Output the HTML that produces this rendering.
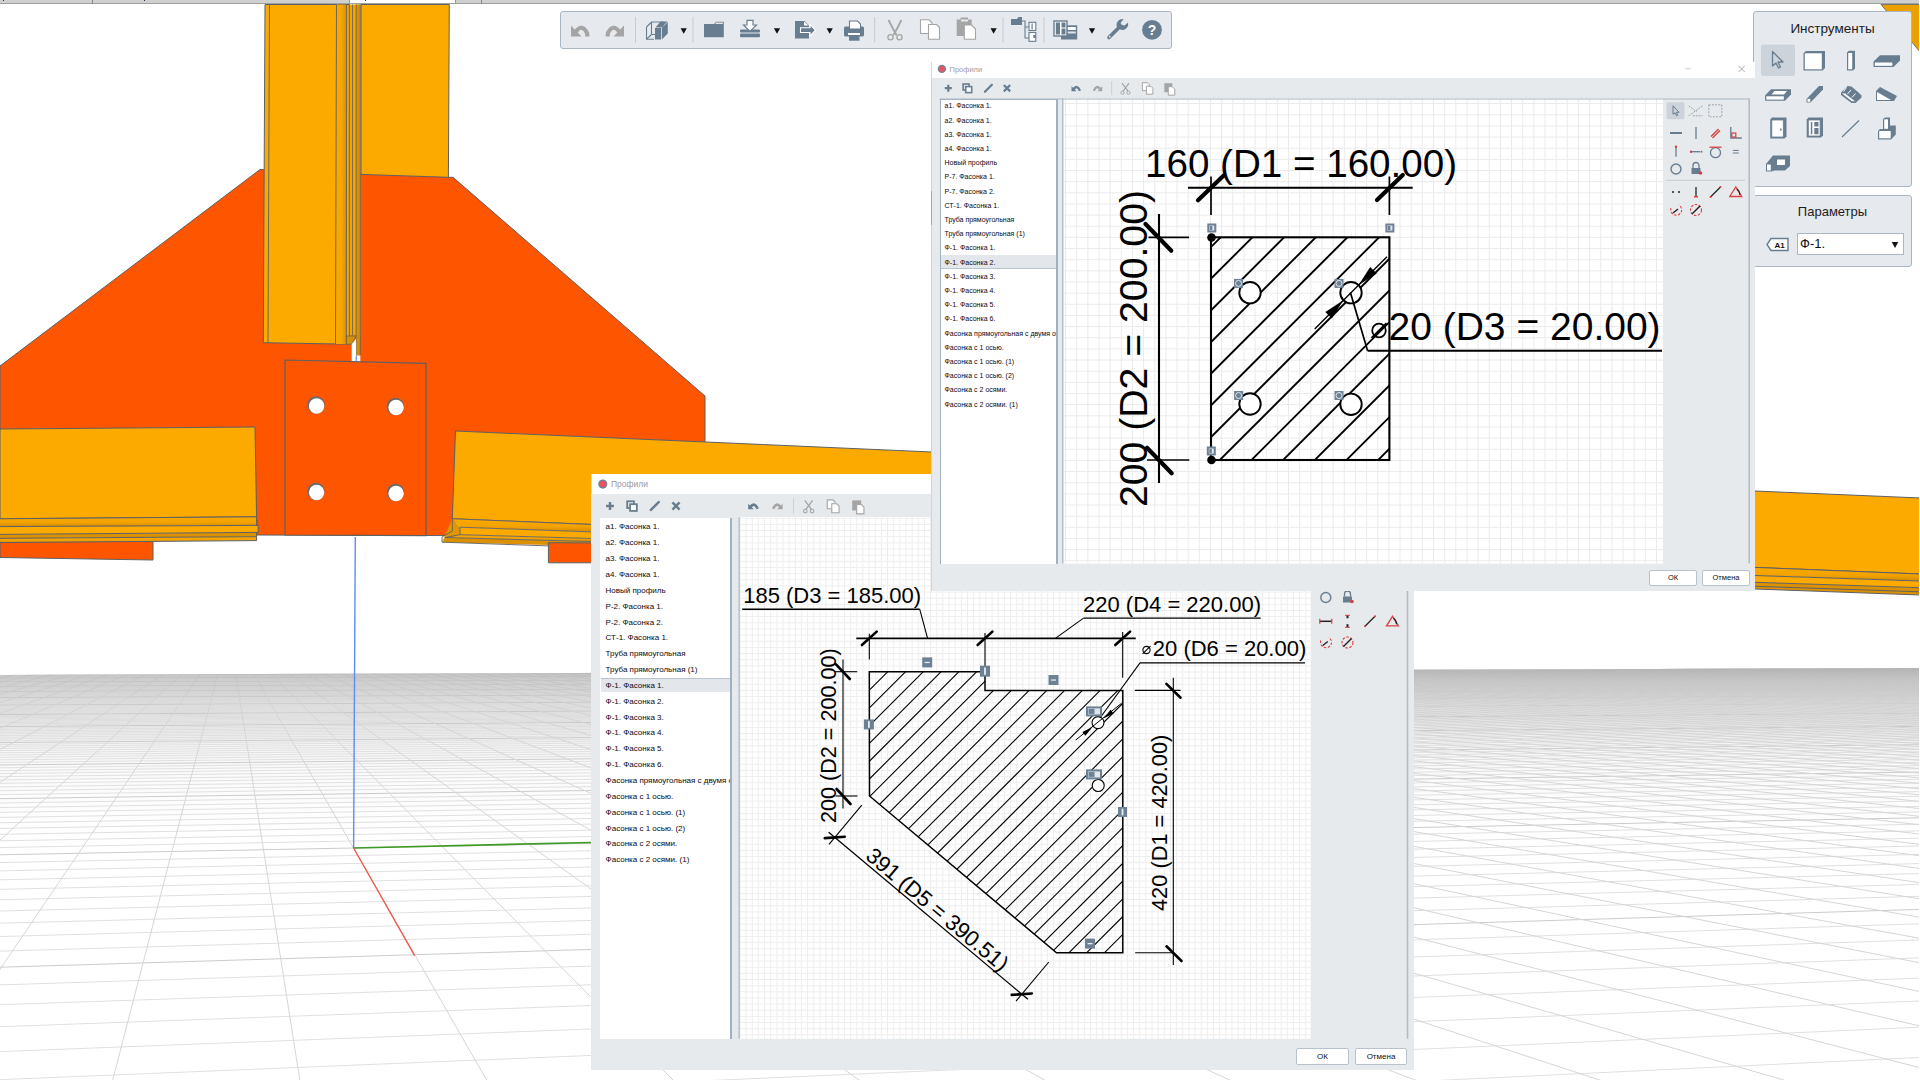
<!DOCTYPE html><html><head><meta charset="utf-8"><style>
*{box-sizing:border-box}
html,body{margin:0;padding:0;width:1920px;height:1080px;overflow:hidden;background:#fff;font-family:"Liberation Sans", sans-serif}
.abs{position:absolute}
.panel{position:absolute;background:#e6eaee;border:1px solid #aab6c2;border-radius:3px}
.dlg{position:absolute;background:#e7eaed}
.lst{position:absolute;background:#fff;border-left:1px solid #9fb0c0;border-right:2px solid #9fb0c0;border-top:1px solid #9fb0c0}
.lst div{position:absolute;left:5px;white-space:nowrap;color:#2a2030;font-size:8px;line-height:10px}
.btn{position:absolute;background:#fff;border:1px solid #b8c2cc;border-radius:2px;font-size:8px;text-align:center;color:#111}
</style></head><body>

<svg class="abs" style="left:0;top:0" width="1920" height="1080" viewBox="0 0 1920 1080">
<defs>
<clipPath id="floorclip"><polygon points="0,675 1920,668 1920,1080 0,1080"/></clipPath>
<linearGradient id="fgrad" x1="0" y1="0" x2="0" y2="1">
<stop offset="0" stop-color="#cbcbcb"/><stop offset="0.03" stop-color="#dadada"/><stop offset="0.1" stop-color="#ececec"/><stop offset="0.25" stop-color="#fafafa"/><stop offset="0.4" stop-color="#fff"/></linearGradient>
<linearGradient id="fshade" x1="0" y1="0" x2="0" y2="1"><stop offset="0" stop-color="#000" stop-opacity="0.16"/><stop offset="0.15" stop-color="#000" stop-opacity="0.08"/><stop offset="0.45" stop-color="#000" stop-opacity="0.02"/><stop offset="1" stop-color="#000" stop-opacity="0"/></linearGradient>
</defs>
<g clip-path="url(#floorclip)">
<rect x="0" y="668" width="1920" height="412" fill="url(#fgrad)"/>
<line x1="-8939.0" y1="683.0" x2="1980.5" y2="667.1" stroke="#cbcbcb" stroke-width="1"/>
<line x1="-9042.9" y1="683.6" x2="1989.1" y2="667.3" stroke="#e0e0e0" stroke-width="1"/>
<line x1="-9149.2" y1="684.2" x2="1997.8" y2="667.5" stroke="#e0e0e0" stroke-width="1"/>
<line x1="-9258.0" y1="684.8" x2="2006.5" y2="667.7" stroke="#e0e0e0" stroke-width="1"/>
<line x1="-9369.3" y1="685.4" x2="2015.3" y2="667.9" stroke="#e0e0e0" stroke-width="1"/>
<line x1="-9483.2" y1="686.1" x2="2024.2" y2="668.0" stroke="#e0e0e0" stroke-width="1"/>
<line x1="-9599.9" y1="686.7" x2="2033.2" y2="668.2" stroke="#e0e0e0" stroke-width="1"/>
<line x1="-9719.4" y1="687.4" x2="2042.3" y2="668.4" stroke="#e0e0e0" stroke-width="1"/>
<line x1="-9841.9" y1="688.1" x2="2051.5" y2="668.6" stroke="#e0e0e0" stroke-width="1"/>
<line x1="-9967.4" y1="688.8" x2="2060.8" y2="668.8" stroke="#e0e0e0" stroke-width="1"/>
<line x1="-10096.1" y1="689.5" x2="2070.1" y2="669.0" stroke="#cbcbcb" stroke-width="1"/>
<line x1="-10228.1" y1="690.3" x2="2079.6" y2="669.2" stroke="#e0e0e0" stroke-width="1"/>
<line x1="-10363.5" y1="691.0" x2="2089.2" y2="669.4" stroke="#e0e0e0" stroke-width="1"/>
<line x1="-10502.4" y1="691.8" x2="2098.8" y2="669.6" stroke="#e0e0e0" stroke-width="1"/>
<line x1="-10645.1" y1="692.6" x2="2108.6" y2="669.8" stroke="#e0e0e0" stroke-width="1"/>
<line x1="-10791.6" y1="693.5" x2="2118.5" y2="670.0" stroke="#e0e0e0" stroke-width="1"/>
<line x1="-10942.1" y1="694.3" x2="2128.4" y2="670.2" stroke="#e0e0e0" stroke-width="1"/>
<line x1="-11096.7" y1="695.2" x2="2138.5" y2="670.4" stroke="#e0e0e0" stroke-width="1"/>
<line x1="-11255.7" y1="696.1" x2="2148.7" y2="670.6" stroke="#e0e0e0" stroke-width="1"/>
<line x1="-11419.2" y1="697.0" x2="2159.0" y2="670.8" stroke="#e0e0e0" stroke-width="1"/>
<line x1="-11587.5" y1="698.0" x2="2169.4" y2="671.0" stroke="#cbcbcb" stroke-width="1"/>
<line x1="-11760.7" y1="699.0" x2="2179.9" y2="671.3" stroke="#e0e0e0" stroke-width="1"/>
<line x1="-11939.0" y1="700.0" x2="2190.5" y2="671.5" stroke="#e0e0e0" stroke-width="1"/>
<line x1="-12122.7" y1="701.0" x2="2201.3" y2="671.7" stroke="#e0e0e0" stroke-width="1"/>
<line x1="-12312.1" y1="702.1" x2="2212.2" y2="671.9" stroke="#e0e0e0" stroke-width="1"/>
<line x1="-12507.3" y1="703.2" x2="2223.2" y2="672.2" stroke="#e0e0e0" stroke-width="1"/>
<line x1="-12708.7" y1="704.3" x2="2234.3" y2="672.4" stroke="#e0e0e0" stroke-width="1"/>
<line x1="-12916.6" y1="705.5" x2="2245.5" y2="672.6" stroke="#e0e0e0" stroke-width="1"/>
<line x1="-13131.3" y1="706.7" x2="2256.9" y2="672.8" stroke="#e0e0e0" stroke-width="1"/>
<line x1="-13353.1" y1="708.0" x2="2268.3" y2="673.1" stroke="#e0e0e0" stroke-width="1"/>
<line x1="-13582.4" y1="709.3" x2="2280.0" y2="673.3" stroke="#cbcbcb" stroke-width="1"/>
<line x1="-13819.6" y1="710.6" x2="2291.7" y2="673.6" stroke="#e0e0e0" stroke-width="1"/>
<line x1="-14065.1" y1="712.0" x2="2303.6" y2="673.8" stroke="#e0e0e0" stroke-width="1"/>
<line x1="-14319.3" y1="713.5" x2="2315.6" y2="674.1" stroke="#e0e0e0" stroke-width="1"/>
<line x1="-14582.7" y1="715.0" x2="2327.8" y2="674.3" stroke="#e0e0e0" stroke-width="1"/>
<line x1="-14855.8" y1="716.5" x2="2340.1" y2="674.6" stroke="#e0e0e0" stroke-width="1"/>
<line x1="-15139.2" y1="718.1" x2="2352.6" y2="674.8" stroke="#e0e0e0" stroke-width="1"/>
<line x1="-15433.4" y1="719.8" x2="2365.2" y2="675.1" stroke="#e0e0e0" stroke-width="1"/>
<line x1="-15739.1" y1="721.5" x2="2377.9" y2="675.3" stroke="#e0e0e0" stroke-width="1"/>
<line x1="-16057.0" y1="723.3" x2="2390.8" y2="675.6" stroke="#e0e0e0" stroke-width="1"/>
<line x1="-16387.8" y1="725.2" x2="2403.9" y2="675.9" stroke="#cbcbcb" stroke-width="1"/>
<line x1="-16732.3" y1="727.1" x2="2417.1" y2="676.2" stroke="#e0e0e0" stroke-width="1"/>
<line x1="-17091.4" y1="729.2" x2="2430.5" y2="676.4" stroke="#e0e0e0" stroke-width="1"/>
<line x1="-17466.0" y1="731.3" x2="2444.1" y2="676.7" stroke="#e0e0e0" stroke-width="1"/>
<line x1="-17857.2" y1="733.5" x2="2457.8" y2="677.0" stroke="#e0e0e0" stroke-width="1"/>
<line x1="-18266.1" y1="735.8" x2="2471.7" y2="677.3" stroke="#e0e0e0" stroke-width="1"/>
<line x1="-18693.9" y1="738.3" x2="2485.7" y2="677.6" stroke="#e0e0e0" stroke-width="1"/>
<line x1="-19142.0" y1="740.8" x2="2500.0" y2="677.9" stroke="#e0e0e0" stroke-width="1"/>
<line x1="-19611.8" y1="743.5" x2="2514.4" y2="678.2" stroke="#e0e0e0" stroke-width="1"/>
<line x1="-20105.0" y1="746.3" x2="2529.0" y2="678.5" stroke="#e0e0e0" stroke-width="1"/>
<line x1="-20623.3" y1="749.2" x2="2543.8" y2="678.8" stroke="#cbcbcb" stroke-width="1"/>
<line x1="-21168.7" y1="752.3" x2="2558.8" y2="679.1" stroke="#e0e0e0" stroke-width="1"/>
<line x1="-21743.4" y1="755.5" x2="2573.9" y2="679.4" stroke="#e0e0e0" stroke-width="1"/>
<line x1="-22349.8" y1="759.0" x2="2589.3" y2="679.7" stroke="#e0e0e0" stroke-width="1"/>
<line x1="-22990.6" y1="762.6" x2="2604.9" y2="680.0" stroke="#e0e0e0" stroke-width="1"/>
<line x1="-23668.9" y1="766.5" x2="2620.7" y2="680.4" stroke="#e0e0e0" stroke-width="1"/>
<line x1="-24388.1" y1="770.5" x2="2636.7" y2="680.7" stroke="#e0e0e0" stroke-width="1"/>
<line x1="-25151.8" y1="774.9" x2="2652.9" y2="681.0" stroke="#e0e0e0" stroke-width="1"/>
<line x1="-25964.4" y1="779.5" x2="2669.3" y2="681.4" stroke="#e0e0e0" stroke-width="1"/>
<line x1="-26830.8" y1="784.4" x2="2686.0" y2="681.7" stroke="#e0e0e0" stroke-width="1"/>
<line x1="-27756.5" y1="789.6" x2="2702.9" y2="682.1" stroke="#cbcbcb" stroke-width="1"/>
<line x1="-28747.8" y1="795.2" x2="2720.0" y2="682.4" stroke="#e0e0e0" stroke-width="1"/>
<line x1="-29811.8" y1="801.3" x2="2737.4" y2="682.8" stroke="#e0e0e0" stroke-width="1"/>
<line x1="-30957.0" y1="807.8" x2="2755.0" y2="683.1" stroke="#e0e0e0" stroke-width="1"/>
<line x1="-32193.0" y1="814.8" x2="2772.8" y2="683.5" stroke="#e0e0e0" stroke-width="1"/>
<line x1="-33530.9" y1="822.4" x2="2790.9" y2="683.9" stroke="#e0e0e0" stroke-width="1"/>
<line x1="-34984.1" y1="830.6" x2="2809.3" y2="684.2" stroke="#e0e0e0" stroke-width="1"/>
<line x1="-36567.9" y1="839.6" x2="2827.9" y2="684.6" stroke="#e0e0e0" stroke-width="1"/>
<line x1="-38301.0" y1="849.4" x2="2846.8" y2="685.0" stroke="#e0e0e0" stroke-width="1"/>
<line x1="-40205.3" y1="860.2" x2="2866.0" y2="685.4" stroke="#e0e0e0" stroke-width="1"/>
<line x1="-42307.8" y1="872.1" x2="2885.5" y2="685.8" stroke="#cbcbcb" stroke-width="1"/>
<line x1="-44640.8" y1="885.3" x2="2905.2" y2="686.2" stroke="#e0e0e0" stroke-width="1"/>
<line x1="-47244.6" y1="900.1" x2="2925.3" y2="686.6" stroke="#e0e0e0" stroke-width="1"/>
<line x1="-50169.2" y1="916.7" x2="2945.6" y2="687.1" stroke="#e0e0e0" stroke-width="1"/>
<line x1="-53477.8" y1="935.4" x2="2966.3" y2="687.5" stroke="#e0e0e0" stroke-width="1"/>
<line x1="-57251.4" y1="956.8" x2="2987.3" y2="687.9" stroke="#e0e0e0" stroke-width="1"/>
<line x1="-61595.3" y1="981.4" x2="3008.6" y2="688.4" stroke="#e0e0e0" stroke-width="1"/>
<line x1="-66649.4" y1="1010.1" x2="3030.2" y2="688.8" stroke="#e0e0e0" stroke-width="1"/>
<line x1="-72603.5" y1="1043.8" x2="3052.2" y2="689.3" stroke="#e0e0e0" stroke-width="1"/>
<line x1="-79721.3" y1="1084.2" x2="3074.5" y2="689.7" stroke="#e0e0e0" stroke-width="1"/>
<line x1="-88381.1" y1="1133.3" x2="3097.2" y2="690.2" stroke="#cbcbcb" stroke-width="1"/>
<line x1="-99144.7" y1="1194.3" x2="3120.2" y2="690.7" stroke="#e0e0e0" stroke-width="1"/>
<line x1="-112884.7" y1="1272.2" x2="3143.6" y2="691.1" stroke="#e0e0e0" stroke-width="1"/>
<line x1="-131034.0" y1="1375.0" x2="3167.4" y2="691.6" stroke="#e0e0e0" stroke-width="1"/>
<line x1="-156120.6" y1="1517.2" x2="3191.6" y2="692.1" stroke="#e0e0e0" stroke-width="1"/>
<line x1="-193061.7" y1="1726.6" x2="3216.2" y2="692.6" stroke="#e0e0e0" stroke-width="1"/>
<line x1="-252859.5" y1="2065.6" x2="3241.2" y2="693.2" stroke="#e0e0e0" stroke-width="1"/>
<line x1="-366229.9" y1="2708.2" x2="3266.6" y2="693.7" stroke="#e0e0e0" stroke-width="1"/>
<line x1="-663583.1" y1="4393.7" x2="3292.5" y2="694.2" stroke="#e0e0e0" stroke-width="1"/>
<line x1="-891026.9" y1="5743.6" x2="3318.8" y2="694.8" stroke="#e0e0e0" stroke-width="1"/>
<line x1="-879894.1" y1="5769.9" x2="3345.5" y2="695.3" stroke="#cbcbcb" stroke-width="1"/>
<line x1="-868761.3" y1="5796.3" x2="3372.8" y2="695.9" stroke="#e0e0e0" stroke-width="1"/>
<line x1="-857628.6" y1="5822.7" x2="3400.5" y2="696.4" stroke="#e0e0e0" stroke-width="1"/>
<line x1="-846495.8" y1="5849.0" x2="3428.7" y2="697.0" stroke="#e0e0e0" stroke-width="1"/>
<line x1="-835363.0" y1="5875.4" x2="3457.4" y2="697.6" stroke="#e0e0e0" stroke-width="1"/>
<line x1="-824230.2" y1="5901.8" x2="3486.6" y2="698.2" stroke="#e0e0e0" stroke-width="1"/>
<line x1="-813097.4" y1="5928.1" x2="3516.3" y2="698.8" stroke="#e0e0e0" stroke-width="1"/>
<line x1="-801964.6" y1="5954.5" x2="3546.6" y2="699.5" stroke="#e0e0e0" stroke-width="1"/>
<line x1="-790831.8" y1="5980.9" x2="3577.5" y2="700.1" stroke="#e0e0e0" stroke-width="1"/>
<line x1="-779699.0" y1="6007.2" x2="3608.9" y2="700.7" stroke="#e0e0e0" stroke-width="1"/>
<line x1="-768566.2" y1="6033.6" x2="3641.0" y2="701.4" stroke="#cbcbcb" stroke-width="1"/>
<line x1="-757433.5" y1="6060.0" x2="3673.6" y2="702.1" stroke="#e0e0e0" stroke-width="1"/>
<line x1="-746300.7" y1="6086.3" x2="3706.9" y2="702.8" stroke="#e0e0e0" stroke-width="1"/>
<line x1="-735167.9" y1="6112.7" x2="3740.9" y2="703.5" stroke="#e0e0e0" stroke-width="1"/>
<line x1="-724035.1" y1="6139.1" x2="3775.5" y2="704.2" stroke="#e0e0e0" stroke-width="1"/>
<line x1="-712902.3" y1="6165.5" x2="3810.8" y2="704.9" stroke="#e0e0e0" stroke-width="1"/>
<line x1="-701769.5" y1="6191.8" x2="3846.8" y2="705.7" stroke="#e0e0e0" stroke-width="1"/>
<line x1="-690636.7" y1="6218.2" x2="3883.5" y2="706.4" stroke="#e0e0e0" stroke-width="1"/>
<line x1="-679503.9" y1="6244.6" x2="3921.0" y2="707.2" stroke="#e0e0e0" stroke-width="1"/>
<line x1="-668371.1" y1="6270.9" x2="3959.2" y2="708.0" stroke="#e0e0e0" stroke-width="1"/>
<line x1="-657238.3" y1="6297.3" x2="3998.3" y2="708.8" stroke="#cbcbcb" stroke-width="1"/>
<line x1="-646105.6" y1="6323.7" x2="4038.2" y2="709.6" stroke="#e0e0e0" stroke-width="1"/>
<line x1="-634972.8" y1="6350.0" x2="4078.9" y2="710.4" stroke="#e0e0e0" stroke-width="1"/>
<line x1="-623840.0" y1="6376.4" x2="4120.6" y2="711.3" stroke="#e0e0e0" stroke-width="1"/>
<line x1="-612707.2" y1="6402.8" x2="4163.1" y2="712.2" stroke="#e0e0e0" stroke-width="1"/>
<line x1="-601574.4" y1="6429.1" x2="4206.6" y2="713.1" stroke="#e0e0e0" stroke-width="1"/>
<line x1="-590441.6" y1="6455.5" x2="4251.0" y2="714.0" stroke="#e0e0e0" stroke-width="1"/>
<line x1="-579308.8" y1="6481.9" x2="4296.5" y2="714.9" stroke="#e0e0e0" stroke-width="1"/>
<line x1="-568176.0" y1="6508.2" x2="4343.0" y2="715.9" stroke="#e0e0e0" stroke-width="1"/>
<line x1="-557043.2" y1="6534.6" x2="4390.5" y2="716.9" stroke="#e0e0e0" stroke-width="1"/>
<line x1="-545910.5" y1="6561.0" x2="4439.2" y2="717.9" stroke="#cbcbcb" stroke-width="1"/>
<line x1="-534777.7" y1="6587.3" x2="4489.1" y2="718.9" stroke="#e0e0e0" stroke-width="1"/>
<line x1="-523644.9" y1="6613.7" x2="4540.1" y2="720.0" stroke="#e0e0e0" stroke-width="1"/>
<line x1="-512512.1" y1="6640.1" x2="4592.4" y2="721.0" stroke="#e0e0e0" stroke-width="1"/>
<line x1="-501379.3" y1="6666.4" x2="4645.9" y2="722.1" stroke="#e0e0e0" stroke-width="1"/>
<line x1="-490246.5" y1="6692.8" x2="4700.8" y2="723.3" stroke="#e0e0e0" stroke-width="1"/>
<line x1="-479113.7" y1="6719.2" x2="4757.0" y2="724.4" stroke="#e0e0e0" stroke-width="1"/>
<line x1="-467980.9" y1="6745.5" x2="4814.7" y2="725.6" stroke="#e0e0e0" stroke-width="1"/>
<line x1="-456848.1" y1="6771.9" x2="4873.9" y2="726.9" stroke="#e0e0e0" stroke-width="1"/>
<line x1="-445715.3" y1="6798.3" x2="4934.6" y2="728.1" stroke="#e0e0e0" stroke-width="1"/>
<line x1="-434582.6" y1="6824.7" x2="4997.0" y2="729.4" stroke="#cbcbcb" stroke-width="1"/>
<line x1="-423449.8" y1="6851.0" x2="5061.0" y2="730.7" stroke="#e0e0e0" stroke-width="1"/>
<line x1="-412317.0" y1="6877.4" x2="5126.7" y2="732.1" stroke="#e0e0e0" stroke-width="1"/>
<line x1="-401184.2" y1="6903.8" x2="5194.3" y2="733.5" stroke="#e0e0e0" stroke-width="1"/>
<line x1="-390051.4" y1="6930.1" x2="5263.8" y2="734.9" stroke="#e0e0e0" stroke-width="1"/>
<line x1="-378918.6" y1="6956.5" x2="5335.2" y2="736.4" stroke="#e0e0e0" stroke-width="1"/>
<line x1="-367785.8" y1="6982.9" x2="5408.7" y2="737.9" stroke="#e0e0e0" stroke-width="1"/>
<line x1="-356653.0" y1="7009.2" x2="5484.3" y2="739.4" stroke="#e0e0e0" stroke-width="1"/>
<line x1="-345520.2" y1="7035.6" x2="5562.2" y2="741.1" stroke="#e0e0e0" stroke-width="1"/>
<line x1="-334387.5" y1="7062.0" x2="5642.4" y2="742.7" stroke="#e0e0e0" stroke-width="1"/>
<line x1="-323254.7" y1="7088.3" x2="5725.1" y2="744.4" stroke="#cbcbcb" stroke-width="1"/>
<line x1="-312121.9" y1="7114.7" x2="5810.3" y2="746.2" stroke="#e0e0e0" stroke-width="1"/>
<line x1="-300989.1" y1="7141.1" x2="5898.2" y2="748.0" stroke="#e0e0e0" stroke-width="1"/>
<line x1="-289856.3" y1="7167.4" x2="5988.9" y2="749.9" stroke="#e0e0e0" stroke-width="1"/>
<line x1="-278723.5" y1="7193.8" x2="6082.6" y2="751.8" stroke="#e0e0e0" stroke-width="1"/>
<line x1="-267590.7" y1="7220.2" x2="6179.4" y2="753.8" stroke="#e0e0e0" stroke-width="1"/>
<line x1="-256457.9" y1="7246.5" x2="6279.4" y2="755.9" stroke="#e0e0e0" stroke-width="1"/>
<line x1="-245325.1" y1="7272.9" x2="6382.9" y2="758.0" stroke="#e0e0e0" stroke-width="1"/>
<line x1="-234192.4" y1="7299.3" x2="6489.9" y2="760.2" stroke="#e0e0e0" stroke-width="1"/>
<line x1="-223059.6" y1="7325.6" x2="6600.8" y2="762.5" stroke="#e0e0e0" stroke-width="1"/>
<line x1="-211926.8" y1="7352.0" x2="6715.6" y2="764.9" stroke="#cbcbcb" stroke-width="1"/>
<line x1="-200794.0" y1="7378.4" x2="6834.6" y2="767.3" stroke="#e0e0e0" stroke-width="1"/>
<line x1="-189661.2" y1="7404.7" x2="6958.1" y2="769.9" stroke="#e0e0e0" stroke-width="1"/>
<line x1="-178528.4" y1="7431.1" x2="7086.3" y2="772.5" stroke="#e0e0e0" stroke-width="1"/>
<line x1="-167395.6" y1="7457.5" x2="7219.5" y2="775.3" stroke="#e0e0e0" stroke-width="1"/>
<line x1="-156262.8" y1="7483.9" x2="7358.0" y2="778.1" stroke="#e0e0e0" stroke-width="1"/>
<line x1="-145130.0" y1="7510.2" x2="7502.1" y2="781.1" stroke="#e0e0e0" stroke-width="1"/>
<line x1="-133997.2" y1="7536.6" x2="7652.1" y2="784.2" stroke="#e0e0e0" stroke-width="1"/>
<line x1="-122864.5" y1="7563.0" x2="7808.4" y2="787.4" stroke="#e0e0e0" stroke-width="1"/>
<line x1="-111731.7" y1="7589.3" x2="7971.4" y2="790.8" stroke="#e0e0e0" stroke-width="1"/>
<line x1="-8939.0" y1="683.0" x2="-898572.6" y2="5725.7" stroke="#d6d6d6" stroke-width="1"/>
<line x1="-8880.7" y1="682.9" x2="-895562.8" y2="5732.8" stroke="#d6d6d6" stroke-width="1"/>
<line x1="-8822.8" y1="682.8" x2="-892553.0" y2="5740.0" stroke="#d6d6d6" stroke-width="1"/>
<line x1="-8765.2" y1="682.7" x2="-889543.1" y2="5747.1" stroke="#d6d6d6" stroke-width="1"/>
<line x1="-8707.9" y1="682.6" x2="-886533.3" y2="5754.2" stroke="#d6d6d6" stroke-width="1"/>
<line x1="-8651.0" y1="682.5" x2="-883523.4" y2="5761.3" stroke="#d6d6d6" stroke-width="1"/>
<line x1="-8594.4" y1="682.5" x2="-880513.6" y2="5768.5" stroke="#d6d6d6" stroke-width="1"/>
<line x1="-8538.2" y1="682.4" x2="-877503.8" y2="5775.6" stroke="#d6d6d6" stroke-width="1"/>
<line x1="-8482.3" y1="682.3" x2="-874493.9" y2="5782.7" stroke="#d6d6d6" stroke-width="1"/>
<line x1="-8426.7" y1="682.2" x2="-871484.1" y2="5789.9" stroke="#d6d6d6" stroke-width="1"/>
<line x1="-8371.4" y1="682.1" x2="-868474.2" y2="5797.0" stroke="#d6d6d6" stroke-width="1"/>
<line x1="-8316.5" y1="682.1" x2="-865464.4" y2="5804.1" stroke="#d6d6d6" stroke-width="1"/>
<line x1="-8261.9" y1="682.0" x2="-862454.6" y2="5811.2" stroke="#d6d6d6" stroke-width="1"/>
<line x1="-8207.6" y1="681.9" x2="-859444.7" y2="5818.4" stroke="#d6d6d6" stroke-width="1"/>
<line x1="-8153.6" y1="681.8" x2="-856434.9" y2="5825.5" stroke="#d6d6d6" stroke-width="1"/>
<line x1="-8100.0" y1="681.8" x2="-853425.0" y2="5832.6" stroke="#d6d6d6" stroke-width="1"/>
<line x1="-8046.6" y1="681.7" x2="-850415.2" y2="5839.8" stroke="#d6d6d6" stroke-width="1"/>
<line x1="-7993.6" y1="681.6" x2="-847405.4" y2="5846.9" stroke="#d6d6d6" stroke-width="1"/>
<line x1="-7940.8" y1="681.5" x2="-844395.5" y2="5854.0" stroke="#d6d6d6" stroke-width="1"/>
<line x1="-7888.4" y1="681.4" x2="-841385.7" y2="5861.1" stroke="#d6d6d6" stroke-width="1"/>
<line x1="-7836.3" y1="681.4" x2="-838375.9" y2="5868.3" stroke="#d6d6d6" stroke-width="1"/>
<line x1="-7784.4" y1="681.3" x2="-835366.0" y2="5875.4" stroke="#d6d6d6" stroke-width="1"/>
<line x1="-7732.9" y1="681.2" x2="-832356.2" y2="5882.5" stroke="#d6d6d6" stroke-width="1"/>
<line x1="-7681.6" y1="681.1" x2="-829346.3" y2="5889.7" stroke="#d6d6d6" stroke-width="1"/>
<line x1="-7630.7" y1="681.1" x2="-826336.5" y2="5896.8" stroke="#d6d6d6" stroke-width="1"/>
<line x1="-7580.0" y1="681.0" x2="-823326.7" y2="5903.9" stroke="#d6d6d6" stroke-width="1"/>
<line x1="-7529.6" y1="680.9" x2="-820316.8" y2="5911.0" stroke="#d6d6d6" stroke-width="1"/>
<line x1="-7479.5" y1="680.9" x2="-817307.0" y2="5918.2" stroke="#d6d6d6" stroke-width="1"/>
<line x1="-7429.7" y1="680.8" x2="-814297.1" y2="5925.3" stroke="#d6d6d6" stroke-width="1"/>
<line x1="-7380.1" y1="680.7" x2="-811287.3" y2="5932.4" stroke="#d6d6d6" stroke-width="1"/>
<line x1="-7330.8" y1="680.6" x2="-808277.5" y2="5939.6" stroke="#d6d6d6" stroke-width="1"/>
<line x1="-7281.8" y1="680.6" x2="-805267.6" y2="5946.7" stroke="#d6d6d6" stroke-width="1"/>
<line x1="-7233.1" y1="680.5" x2="-802257.8" y2="5953.8" stroke="#d6d6d6" stroke-width="1"/>
<line x1="-7184.6" y1="680.4" x2="-799248.0" y2="5960.9" stroke="#d6d6d6" stroke-width="1"/>
<line x1="-7136.4" y1="680.4" x2="-796238.1" y2="5968.1" stroke="#d6d6d6" stroke-width="1"/>
<line x1="-7088.5" y1="680.3" x2="-793228.3" y2="5975.2" stroke="#d6d6d6" stroke-width="1"/>
<line x1="-7040.8" y1="680.2" x2="-790218.4" y2="5982.3" stroke="#d6d6d6" stroke-width="1"/>
<line x1="-6993.4" y1="680.1" x2="-787208.6" y2="5989.5" stroke="#d6d6d6" stroke-width="1"/>
<line x1="-6946.3" y1="680.1" x2="-784198.8" y2="5996.6" stroke="#d6d6d6" stroke-width="1"/>
<line x1="-6899.4" y1="680.0" x2="-781188.9" y2="6003.7" stroke="#d6d6d6" stroke-width="1"/>
<line x1="-6852.7" y1="679.9" x2="-778179.1" y2="6010.8" stroke="#d6d6d6" stroke-width="1"/>
<line x1="-6806.3" y1="679.9" x2="-775169.2" y2="6018.0" stroke="#d6d6d6" stroke-width="1"/>
<line x1="-6760.2" y1="679.8" x2="-772159.4" y2="6025.1" stroke="#d6d6d6" stroke-width="1"/>
<line x1="-6714.3" y1="679.7" x2="-769149.6" y2="6032.2" stroke="#d6d6d6" stroke-width="1"/>
<line x1="-6668.6" y1="679.7" x2="-766139.7" y2="6039.4" stroke="#d6d6d6" stroke-width="1"/>
<line x1="-6623.2" y1="679.6" x2="-763129.9" y2="6046.5" stroke="#d6d6d6" stroke-width="1"/>
<line x1="-6578.1" y1="679.5" x2="-760120.0" y2="6053.6" stroke="#d6d6d6" stroke-width="1"/>
<line x1="-6533.1" y1="679.5" x2="-757110.2" y2="6060.7" stroke="#d6d6d6" stroke-width="1"/>
<line x1="-6488.4" y1="679.4" x2="-754100.4" y2="6067.9" stroke="#d6d6d6" stroke-width="1"/>
<line x1="-6444.0" y1="679.4" x2="-751090.5" y2="6075.0" stroke="#d6d6d6" stroke-width="1"/>
<line x1="-6399.8" y1="679.3" x2="-748080.7" y2="6082.1" stroke="#d6d6d6" stroke-width="1"/>
<line x1="-6355.8" y1="679.2" x2="-745070.9" y2="6089.3" stroke="#d6d6d6" stroke-width="1"/>
<line x1="-6312.0" y1="679.2" x2="-742061.0" y2="6096.4" stroke="#d6d6d6" stroke-width="1"/>
<line x1="-6268.5" y1="679.1" x2="-739051.2" y2="6103.5" stroke="#d6d6d6" stroke-width="1"/>
<line x1="-6225.2" y1="679.0" x2="-736041.3" y2="6110.6" stroke="#d6d6d6" stroke-width="1"/>
<line x1="-6182.1" y1="679.0" x2="-733031.5" y2="6117.8" stroke="#d6d6d6" stroke-width="1"/>
<line x1="-6139.3" y1="678.9" x2="-730021.7" y2="6124.9" stroke="#d6d6d6" stroke-width="1"/>
<line x1="-6096.6" y1="678.8" x2="-727011.8" y2="6132.0" stroke="#d6d6d6" stroke-width="1"/>
<line x1="-6054.2" y1="678.8" x2="-724002.0" y2="6139.2" stroke="#d6d6d6" stroke-width="1"/>
<line x1="-6012.0" y1="678.7" x2="-720992.1" y2="6146.3" stroke="#d6d6d6" stroke-width="1"/>
<line x1="-5970.0" y1="678.7" x2="-717982.3" y2="6153.4" stroke="#d6d6d6" stroke-width="1"/>
<line x1="-5928.3" y1="678.6" x2="-714972.5" y2="6160.6" stroke="#d6d6d6" stroke-width="1"/>
<line x1="-5886.7" y1="678.5" x2="-711962.6" y2="6167.7" stroke="#d6d6d6" stroke-width="1"/>
<line x1="-5845.4" y1="678.5" x2="-708952.8" y2="6174.8" stroke="#d6d6d6" stroke-width="1"/>
<line x1="-5804.2" y1="678.4" x2="-705942.9" y2="6181.9" stroke="#d6d6d6" stroke-width="1"/>
<line x1="-5763.3" y1="678.4" x2="-702933.1" y2="6189.1" stroke="#d6d6d6" stroke-width="1"/>
<line x1="-5722.6" y1="678.3" x2="-699923.3" y2="6196.2" stroke="#d6d6d6" stroke-width="1"/>
<line x1="-5682.1" y1="678.2" x2="-696913.4" y2="6203.3" stroke="#d6d6d6" stroke-width="1"/>
<line x1="-5641.8" y1="678.2" x2="-693903.6" y2="6210.5" stroke="#d6d6d6" stroke-width="1"/>
<line x1="-5601.7" y1="678.1" x2="-690893.8" y2="6217.6" stroke="#d6d6d6" stroke-width="1"/>
<line x1="-5561.8" y1="678.1" x2="-687883.9" y2="6224.7" stroke="#d6d6d6" stroke-width="1"/>
<line x1="-5522.1" y1="678.0" x2="-684874.1" y2="6231.8" stroke="#d6d6d6" stroke-width="1"/>
<line x1="-5482.6" y1="678.0" x2="-681864.2" y2="6239.0" stroke="#d6d6d6" stroke-width="1"/>
<line x1="-5443.3" y1="677.9" x2="-678854.4" y2="6246.1" stroke="#d6d6d6" stroke-width="1"/>
<line x1="-5404.1" y1="677.8" x2="-675844.6" y2="6253.2" stroke="#d6d6d6" stroke-width="1"/>
<line x1="-5365.2" y1="677.8" x2="-672834.7" y2="6260.4" stroke="#d6d6d6" stroke-width="1"/>
<line x1="-5326.5" y1="677.7" x2="-669824.9" y2="6267.5" stroke="#d6d6d6" stroke-width="1"/>
<line x1="-5287.9" y1="677.7" x2="-666815.0" y2="6274.6" stroke="#d6d6d6" stroke-width="1"/>
<line x1="-5249.6" y1="677.6" x2="-663805.2" y2="6281.7" stroke="#d6d6d6" stroke-width="1"/>
<line x1="-5211.4" y1="677.6" x2="-660795.4" y2="6288.9" stroke="#d6d6d6" stroke-width="1"/>
<line x1="-5173.4" y1="677.5" x2="-657785.5" y2="6296.0" stroke="#d6d6d6" stroke-width="1"/>
<line x1="-5135.7" y1="677.5" x2="-654775.7" y2="6303.1" stroke="#d6d6d6" stroke-width="1"/>
<line x1="-5098.0" y1="677.4" x2="-651765.9" y2="6310.3" stroke="#d6d6d6" stroke-width="1"/>
<line x1="-5060.6" y1="677.3" x2="-648756.0" y2="6317.4" stroke="#d6d6d6" stroke-width="1"/>
<line x1="-5023.4" y1="677.3" x2="-645746.2" y2="6324.5" stroke="#d6d6d6" stroke-width="1"/>
<line x1="-4986.3" y1="677.2" x2="-642736.3" y2="6331.6" stroke="#d6d6d6" stroke-width="1"/>
<line x1="-4949.4" y1="677.2" x2="-639726.5" y2="6338.8" stroke="#d6d6d6" stroke-width="1"/>
<line x1="-4912.7" y1="677.1" x2="-636716.7" y2="6345.9" stroke="#d6d6d6" stroke-width="1"/>
<line x1="-4876.2" y1="677.1" x2="-633706.8" y2="6353.0" stroke="#d6d6d6" stroke-width="1"/>
<line x1="-4839.8" y1="677.0" x2="-630697.0" y2="6360.2" stroke="#d6d6d6" stroke-width="1"/>
<line x1="-4803.6" y1="677.0" x2="-627687.1" y2="6367.3" stroke="#d6d6d6" stroke-width="1"/>
<line x1="-4767.6" y1="676.9" x2="-624677.3" y2="6374.4" stroke="#d6d6d6" stroke-width="1"/>
<line x1="-4731.7" y1="676.9" x2="-621667.5" y2="6381.5" stroke="#d6d6d6" stroke-width="1"/>
<line x1="-4696.1" y1="676.8" x2="-618657.6" y2="6388.7" stroke="#d6d6d6" stroke-width="1"/>
<line x1="-4660.5" y1="676.8" x2="-615647.8" y2="6395.8" stroke="#d6d6d6" stroke-width="1"/>
<line x1="-4625.2" y1="676.7" x2="-612637.9" y2="6402.9" stroke="#d6d6d6" stroke-width="1"/>
<line x1="-4590.0" y1="676.7" x2="-609628.1" y2="6410.1" stroke="#d6d6d6" stroke-width="1"/>
<line x1="-4555.0" y1="676.6" x2="-606618.3" y2="6417.2" stroke="#d6d6d6" stroke-width="1"/>
<line x1="-4520.2" y1="676.6" x2="-603608.4" y2="6424.3" stroke="#d6d6d6" stroke-width="1"/>
<line x1="-4485.5" y1="676.5" x2="-600598.6" y2="6431.4" stroke="#d6d6d6" stroke-width="1"/>
<line x1="-4451.0" y1="676.5" x2="-597588.8" y2="6438.6" stroke="#d6d6d6" stroke-width="1"/>
<line x1="-4416.6" y1="676.4" x2="-594578.9" y2="6445.7" stroke="#d6d6d6" stroke-width="1"/>
<line x1="-4382.4" y1="676.4" x2="-591569.1" y2="6452.8" stroke="#d6d6d6" stroke-width="1"/>
<line x1="-4348.3" y1="676.3" x2="-588559.2" y2="6460.0" stroke="#d6d6d6" stroke-width="1"/>
<line x1="-4314.4" y1="676.3" x2="-585549.4" y2="6467.1" stroke="#d6d6d6" stroke-width="1"/>
<line x1="-4280.7" y1="676.2" x2="-582539.6" y2="6474.2" stroke="#d6d6d6" stroke-width="1"/>
<line x1="-4247.1" y1="676.2" x2="-579529.7" y2="6481.3" stroke="#d6d6d6" stroke-width="1"/>
<line x1="-4213.7" y1="676.1" x2="-576519.9" y2="6488.5" stroke="#d6d6d6" stroke-width="1"/>
<line x1="-4180.4" y1="676.1" x2="-573510.0" y2="6495.6" stroke="#d6d6d6" stroke-width="1"/>
<line x1="-4147.3" y1="676.0" x2="-570500.2" y2="6502.7" stroke="#d6d6d6" stroke-width="1"/>
<line x1="-4114.3" y1="676.0" x2="-567490.4" y2="6509.9" stroke="#d6d6d6" stroke-width="1"/>
<line x1="-4081.5" y1="675.9" x2="-564480.5" y2="6517.0" stroke="#d6d6d6" stroke-width="1"/>
<line x1="-4048.8" y1="675.9" x2="-561470.7" y2="6524.1" stroke="#d6d6d6" stroke-width="1"/>
<line x1="-4016.3" y1="675.8" x2="-558460.8" y2="6531.2" stroke="#d6d6d6" stroke-width="1"/>
<line x1="-3983.9" y1="675.8" x2="-555451.0" y2="6538.4" stroke="#d6d6d6" stroke-width="1"/>
<line x1="-3951.7" y1="675.7" x2="-552441.2" y2="6545.5" stroke="#d6d6d6" stroke-width="1"/>
<line x1="-3919.6" y1="675.7" x2="-549431.3" y2="6552.6" stroke="#d6d6d6" stroke-width="1"/>
<line x1="-3887.7" y1="675.6" x2="-546421.5" y2="6559.8" stroke="#d6d6d6" stroke-width="1"/>
<line x1="-3855.9" y1="675.6" x2="-543411.7" y2="6566.9" stroke="#d6d6d6" stroke-width="1"/>
<line x1="-3824.2" y1="675.6" x2="-540401.8" y2="6574.0" stroke="#d6d6d6" stroke-width="1"/>
<line x1="-3792.7" y1="675.5" x2="-537392.0" y2="6581.1" stroke="#d6d6d6" stroke-width="1"/>
<line x1="-3761.3" y1="675.5" x2="-534382.1" y2="6588.3" stroke="#d6d6d6" stroke-width="1"/>
<line x1="-3730.1" y1="675.4" x2="-531372.3" y2="6595.4" stroke="#d6d6d6" stroke-width="1"/>
<line x1="-3699.0" y1="675.4" x2="-528362.5" y2="6602.5" stroke="#d6d6d6" stroke-width="1"/>
<line x1="-3668.0" y1="675.3" x2="-525352.6" y2="6609.7" stroke="#d6d6d6" stroke-width="1"/>
<line x1="-3637.2" y1="675.3" x2="-522342.8" y2="6616.8" stroke="#d6d6d6" stroke-width="1"/>
<line x1="-3606.5" y1="675.2" x2="-519332.9" y2="6623.9" stroke="#d6d6d6" stroke-width="1"/>
<line x1="-3575.9" y1="675.2" x2="-516323.1" y2="6631.1" stroke="#d6d6d6" stroke-width="1"/>
<line x1="-3545.5" y1="675.2" x2="-513313.3" y2="6638.2" stroke="#d6d6d6" stroke-width="1"/>
<line x1="-3515.2" y1="675.1" x2="-510303.4" y2="6645.3" stroke="#d6d6d6" stroke-width="1"/>
<line x1="-3485.0" y1="675.1" x2="-507293.6" y2="6652.4" stroke="#d6d6d6" stroke-width="1"/>
<line x1="-3455.0" y1="675.0" x2="-504283.8" y2="6659.6" stroke="#d6d6d6" stroke-width="1"/>
<line x1="-3425.1" y1="675.0" x2="-501273.9" y2="6666.7" stroke="#d6d6d6" stroke-width="1"/>
<line x1="-3395.3" y1="674.9" x2="-498264.1" y2="6673.8" stroke="#d6d6d6" stroke-width="1"/>
<line x1="-3365.6" y1="674.9" x2="-495254.2" y2="6681.0" stroke="#d6d6d6" stroke-width="1"/>
<line x1="-3336.1" y1="674.8" x2="-492244.4" y2="6688.1" stroke="#d6d6d6" stroke-width="1"/>
<line x1="-3306.7" y1="674.8" x2="-489234.6" y2="6695.2" stroke="#d6d6d6" stroke-width="1"/>
<line x1="-3277.5" y1="674.8" x2="-486224.7" y2="6702.3" stroke="#d6d6d6" stroke-width="1"/>
<line x1="-3248.3" y1="674.7" x2="-483214.9" y2="6709.5" stroke="#d6d6d6" stroke-width="1"/>
<line x1="-3219.3" y1="674.7" x2="-480205.0" y2="6716.6" stroke="#d6d6d6" stroke-width="1"/>
<line x1="-3190.4" y1="674.6" x2="-477195.2" y2="6723.7" stroke="#d6d6d6" stroke-width="1"/>
<line x1="-3161.7" y1="674.6" x2="-474185.4" y2="6730.9" stroke="#d6d6d6" stroke-width="1"/>
<line x1="-3133.0" y1="674.6" x2="-471175.5" y2="6738.0" stroke="#d6d6d6" stroke-width="1"/>
<line x1="-3104.5" y1="674.5" x2="-468165.7" y2="6745.1" stroke="#d6d6d6" stroke-width="1"/>
<line x1="-3076.1" y1="674.5" x2="-465155.8" y2="6752.2" stroke="#d6d6d6" stroke-width="1"/>
<line x1="-3047.8" y1="674.4" x2="-462146.0" y2="6759.4" stroke="#d6d6d6" stroke-width="1"/>
<line x1="-3019.6" y1="674.4" x2="-459136.2" y2="6766.5" stroke="#d6d6d6" stroke-width="1"/>
<line x1="-2991.6" y1="674.3" x2="-456126.3" y2="6773.6" stroke="#d6d6d6" stroke-width="1"/>
<line x1="-2963.6" y1="674.3" x2="-453116.5" y2="6780.8" stroke="#d6d6d6" stroke-width="1"/>
<line x1="-2935.8" y1="674.3" x2="-450106.7" y2="6787.9" stroke="#d6d6d6" stroke-width="1"/>
<line x1="-2908.1" y1="674.2" x2="-447096.8" y2="6795.0" stroke="#d6d6d6" stroke-width="1"/>
<line x1="-2880.5" y1="674.2" x2="-444087.0" y2="6802.1" stroke="#d6d6d6" stroke-width="1"/>
<line x1="-2853.1" y1="674.1" x2="-441077.1" y2="6809.3" stroke="#d6d6d6" stroke-width="1"/>
<line x1="-2825.7" y1="674.1" x2="-438067.3" y2="6816.4" stroke="#d6d6d6" stroke-width="1"/>
<line x1="-2798.5" y1="674.1" x2="-435057.5" y2="6823.5" stroke="#d6d6d6" stroke-width="1"/>
<line x1="-2771.3" y1="674.0" x2="-432047.6" y2="6830.7" stroke="#d6d6d6" stroke-width="1"/>
<line x1="-2744.3" y1="674.0" x2="-429037.8" y2="6837.8" stroke="#d6d6d6" stroke-width="1"/>
<line x1="-2717.4" y1="674.0" x2="-426027.9" y2="6844.9" stroke="#d6d6d6" stroke-width="1"/>
<line x1="-2690.6" y1="673.9" x2="-423018.1" y2="6852.0" stroke="#d6d6d6" stroke-width="1"/>
<line x1="-2663.9" y1="673.9" x2="-420008.3" y2="6859.2" stroke="#d6d6d6" stroke-width="1"/>
<line x1="-2637.3" y1="673.8" x2="-416998.4" y2="6866.3" stroke="#d6d6d6" stroke-width="1"/>
<line x1="-2610.8" y1="673.8" x2="-413988.6" y2="6873.4" stroke="#d6d6d6" stroke-width="1"/>
<line x1="-2584.5" y1="673.8" x2="-410978.7" y2="6880.6" stroke="#d6d6d6" stroke-width="1"/>
<line x1="-2558.2" y1="673.7" x2="-407968.9" y2="6887.7" stroke="#d6d6d6" stroke-width="1"/>
<line x1="-2532.1" y1="673.7" x2="-404959.1" y2="6894.8" stroke="#d6d6d6" stroke-width="1"/>
<line x1="-2506.0" y1="673.6" x2="-401949.2" y2="6901.9" stroke="#d6d6d6" stroke-width="1"/>
<line x1="-2480.1" y1="673.6" x2="-398939.4" y2="6909.1" stroke="#d6d6d6" stroke-width="1"/>
<line x1="-2454.3" y1="673.6" x2="-395929.6" y2="6916.2" stroke="#d6d6d6" stroke-width="1"/>
<line x1="-2428.5" y1="673.5" x2="-392919.7" y2="6923.3" stroke="#d6d6d6" stroke-width="1"/>
<line x1="-2402.9" y1="673.5" x2="-389909.9" y2="6930.5" stroke="#d6d6d6" stroke-width="1"/>
<line x1="-2377.4" y1="673.5" x2="-386900.0" y2="6937.6" stroke="#d6d6d6" stroke-width="1"/>
<line x1="-2351.9" y1="673.4" x2="-383890.2" y2="6944.7" stroke="#d6d6d6" stroke-width="1"/>
<line x1="-2326.6" y1="673.4" x2="-380880.4" y2="6951.8" stroke="#d6d6d6" stroke-width="1"/>
<line x1="-2301.4" y1="673.3" x2="-377870.5" y2="6959.0" stroke="#d6d6d6" stroke-width="1"/>
<line x1="-2276.3" y1="673.3" x2="-374860.7" y2="6966.1" stroke="#d6d6d6" stroke-width="1"/>
<line x1="-2251.2" y1="673.3" x2="-371850.8" y2="6973.2" stroke="#d6d6d6" stroke-width="1"/>
<line x1="-2226.3" y1="673.2" x2="-368841.0" y2="6980.4" stroke="#d6d6d6" stroke-width="1"/>
<line x1="-2201.5" y1="673.2" x2="-365831.2" y2="6987.5" stroke="#d6d6d6" stroke-width="1"/>
<line x1="-2176.8" y1="673.2" x2="-362821.3" y2="6994.6" stroke="#d6d6d6" stroke-width="1"/>
<line x1="-2152.1" y1="673.1" x2="-359811.5" y2="7001.7" stroke="#d6d6d6" stroke-width="1"/>
<line x1="-2127.6" y1="673.1" x2="-356801.7" y2="7008.9" stroke="#d6d6d6" stroke-width="1"/>
<line x1="-2103.2" y1="673.1" x2="-353791.8" y2="7016.0" stroke="#d6d6d6" stroke-width="1"/>
<line x1="-2078.8" y1="673.0" x2="-350782.0" y2="7023.1" stroke="#d6d6d6" stroke-width="1"/>
<line x1="-2054.6" y1="673.0" x2="-347772.1" y2="7030.3" stroke="#d6d6d6" stroke-width="1"/>
<line x1="-2030.4" y1="673.0" x2="-344762.3" y2="7037.4" stroke="#d6d6d6" stroke-width="1"/>
<line x1="-2006.4" y1="672.9" x2="-341752.5" y2="7044.5" stroke="#d6d6d6" stroke-width="1"/>
<line x1="-1982.4" y1="672.9" x2="-338742.6" y2="7051.7" stroke="#d6d6d6" stroke-width="1"/>
<line x1="-1958.5" y1="672.9" x2="-335732.8" y2="7058.8" stroke="#d6d6d6" stroke-width="1"/>
<line x1="-1934.7" y1="672.8" x2="-332722.9" y2="7065.9" stroke="#d6d6d6" stroke-width="1"/>
<line x1="-1911.0" y1="672.8" x2="-329713.1" y2="7073.0" stroke="#d6d6d6" stroke-width="1"/>
<line x1="-1887.4" y1="672.7" x2="-326703.3" y2="7080.2" stroke="#d6d6d6" stroke-width="1"/>
<line x1="-1863.9" y1="672.7" x2="-323693.4" y2="7087.3" stroke="#d6d6d6" stroke-width="1"/>
<line x1="-1840.5" y1="672.7" x2="-320683.6" y2="7094.4" stroke="#d6d6d6" stroke-width="1"/>
<line x1="-1817.2" y1="672.6" x2="-317673.7" y2="7101.6" stroke="#d6d6d6" stroke-width="1"/>
<line x1="-1793.9" y1="672.6" x2="-314663.9" y2="7108.7" stroke="#d6d6d6" stroke-width="1"/>
<line x1="-1770.8" y1="672.6" x2="-311654.1" y2="7115.8" stroke="#d6d6d6" stroke-width="1"/>
<line x1="-1747.7" y1="672.5" x2="-308644.2" y2="7122.9" stroke="#d6d6d6" stroke-width="1"/>
<line x1="-1724.7" y1="672.5" x2="-305634.4" y2="7130.1" stroke="#d6d6d6" stroke-width="1"/>
<line x1="-1701.9" y1="672.5" x2="-302624.6" y2="7137.2" stroke="#d6d6d6" stroke-width="1"/>
<line x1="-1679.1" y1="672.4" x2="-299614.7" y2="7144.3" stroke="#d6d6d6" stroke-width="1"/>
<line x1="-1656.3" y1="672.4" x2="-296604.9" y2="7151.5" stroke="#d6d6d6" stroke-width="1"/>
<line x1="-1633.7" y1="672.4" x2="-293595.0" y2="7158.6" stroke="#d6d6d6" stroke-width="1"/>
<line x1="-1611.2" y1="672.3" x2="-290585.2" y2="7165.7" stroke="#d6d6d6" stroke-width="1"/>
<line x1="-1588.7" y1="672.3" x2="-287575.4" y2="7172.8" stroke="#d6d6d6" stroke-width="1"/>
<line x1="-1566.3" y1="672.3" x2="-284565.5" y2="7180.0" stroke="#d6d6d6" stroke-width="1"/>
<line x1="-1544.0" y1="672.3" x2="-281555.7" y2="7187.1" stroke="#d6d6d6" stroke-width="1"/>
<line x1="-1521.8" y1="672.2" x2="-278545.8" y2="7194.2" stroke="#d6d6d6" stroke-width="1"/>
<line x1="-1499.7" y1="672.2" x2="-275536.0" y2="7201.4" stroke="#d6d6d6" stroke-width="1"/>
<line x1="-1477.6" y1="672.2" x2="-272526.2" y2="7208.5" stroke="#d6d6d6" stroke-width="1"/>
<line x1="-1455.7" y1="672.1" x2="-269516.3" y2="7215.6" stroke="#d6d6d6" stroke-width="1"/>
<line x1="-1433.8" y1="672.1" x2="-266506.5" y2="7222.7" stroke="#d6d6d6" stroke-width="1"/>
<line x1="-1412.0" y1="672.1" x2="-263496.7" y2="7229.9" stroke="#d6d6d6" stroke-width="1"/>
<line x1="-1390.3" y1="672.0" x2="-260486.8" y2="7237.0" stroke="#d6d6d6" stroke-width="1"/>
<line x1="-1368.6" y1="672.0" x2="-257477.0" y2="7244.1" stroke="#d6d6d6" stroke-width="1"/>
<line x1="-1347.1" y1="672.0" x2="-254467.1" y2="7251.3" stroke="#d6d6d6" stroke-width="1"/>
<line x1="-1325.6" y1="671.9" x2="-251457.3" y2="7258.4" stroke="#d6d6d6" stroke-width="1"/>
<line x1="-1304.2" y1="671.9" x2="-248447.5" y2="7265.5" stroke="#d6d6d6" stroke-width="1"/>
<line x1="-1282.9" y1="671.9" x2="-245437.6" y2="7272.6" stroke="#d6d6d6" stroke-width="1"/>
<line x1="-1261.6" y1="671.8" x2="-242427.8" y2="7279.8" stroke="#d6d6d6" stroke-width="1"/>
<line x1="-1240.4" y1="671.8" x2="-239417.9" y2="7286.9" stroke="#d6d6d6" stroke-width="1"/>
<line x1="-1219.3" y1="671.8" x2="-236408.1" y2="7294.0" stroke="#d6d6d6" stroke-width="1"/>
<line x1="-1198.3" y1="671.8" x2="-233398.3" y2="7301.2" stroke="#d6d6d6" stroke-width="1"/>
<line x1="-1177.4" y1="671.7" x2="-230388.4" y2="7308.3" stroke="#d6d6d6" stroke-width="1"/>
<line x1="-1156.5" y1="671.7" x2="-227378.6" y2="7315.4" stroke="#d6d6d6" stroke-width="1"/>
<line x1="-1135.7" y1="671.7" x2="-224368.7" y2="7322.5" stroke="#d6d6d6" stroke-width="1"/>
<line x1="-1115.0" y1="671.6" x2="-221358.9" y2="7329.7" stroke="#d6d6d6" stroke-width="1"/>
<line x1="-1094.4" y1="671.6" x2="-218349.1" y2="7336.8" stroke="#d6d6d6" stroke-width="1"/>
<line x1="-1073.8" y1="671.6" x2="-215339.2" y2="7343.9" stroke="#d6d6d6" stroke-width="1"/>
<line x1="-1053.3" y1="671.5" x2="-212329.4" y2="7351.1" stroke="#d6d6d6" stroke-width="1"/>
<line x1="-1032.9" y1="671.5" x2="-209319.6" y2="7358.2" stroke="#d6d6d6" stroke-width="1"/>
<line x1="-1012.6" y1="671.5" x2="-206309.7" y2="7365.3" stroke="#d6d6d6" stroke-width="1"/>
<line x1="-992.3" y1="671.5" x2="-203299.9" y2="7372.4" stroke="#d6d6d6" stroke-width="1"/>
<line x1="-972.1" y1="671.4" x2="-200290.0" y2="7379.6" stroke="#d6d6d6" stroke-width="1"/>
<line x1="-952.0" y1="671.4" x2="-197280.2" y2="7386.7" stroke="#d6d6d6" stroke-width="1"/>
<line x1="-931.9" y1="671.4" x2="-194270.4" y2="7393.8" stroke="#d6d6d6" stroke-width="1"/>
<line x1="-911.9" y1="671.3" x2="-191260.5" y2="7401.0" stroke="#d6d6d6" stroke-width="1"/>
<line x1="-892.0" y1="671.3" x2="-188250.7" y2="7408.1" stroke="#d6d6d6" stroke-width="1"/>
<line x1="-872.1" y1="671.3" x2="-185240.8" y2="7415.2" stroke="#d6d6d6" stroke-width="1"/>
<line x1="-852.4" y1="671.2" x2="-182231.0" y2="7422.3" stroke="#d6d6d6" stroke-width="1"/>
<line x1="-832.7" y1="671.2" x2="-179221.2" y2="7429.5" stroke="#d6d6d6" stroke-width="1"/>
<line x1="-813.0" y1="671.2" x2="-176211.3" y2="7436.6" stroke="#d6d6d6" stroke-width="1"/>
<line x1="-793.5" y1="671.2" x2="-173201.5" y2="7443.7" stroke="#d6d6d6" stroke-width="1"/>
<line x1="-774.0" y1="671.1" x2="-170191.6" y2="7450.9" stroke="#d6d6d6" stroke-width="1"/>
<line x1="-754.5" y1="671.1" x2="-167181.8" y2="7458.0" stroke="#d6d6d6" stroke-width="1"/>
<line x1="-735.2" y1="671.1" x2="-164172.0" y2="7465.1" stroke="#d6d6d6" stroke-width="1"/>
<line x1="-715.9" y1="671.1" x2="-161162.1" y2="7472.2" stroke="#d6d6d6" stroke-width="1"/>
<line x1="-696.6" y1="671.0" x2="-158152.3" y2="7479.4" stroke="#d6d6d6" stroke-width="1"/>
<line x1="-677.5" y1="671.0" x2="-155142.5" y2="7486.5" stroke="#d6d6d6" stroke-width="1"/>
<line x1="-658.4" y1="671.0" x2="-152132.6" y2="7493.6" stroke="#d6d6d6" stroke-width="1"/>
<line x1="-639.3" y1="670.9" x2="-149122.8" y2="7500.8" stroke="#d6d6d6" stroke-width="1"/>
<line x1="-620.4" y1="670.9" x2="-146112.9" y2="7507.9" stroke="#d6d6d6" stroke-width="1"/>
<line x1="-601.5" y1="670.9" x2="-143103.1" y2="7515.0" stroke="#d6d6d6" stroke-width="1"/>
<line x1="-582.6" y1="670.9" x2="-140093.3" y2="7522.2" stroke="#d6d6d6" stroke-width="1"/>
<line x1="-563.9" y1="670.8" x2="-137083.4" y2="7529.3" stroke="#d6d6d6" stroke-width="1"/>
<line x1="-545.2" y1="670.8" x2="-134073.6" y2="7536.4" stroke="#d6d6d6" stroke-width="1"/>
<line x1="-526.5" y1="670.8" x2="-131063.7" y2="7543.5" stroke="#d6d6d6" stroke-width="1"/>
<line x1="-507.9" y1="670.8" x2="-128053.9" y2="7550.7" stroke="#d6d6d6" stroke-width="1"/>
<line x1="-489.4" y1="670.7" x2="-125044.1" y2="7557.8" stroke="#d6d6d6" stroke-width="1"/>
<line x1="-471.0" y1="670.7" x2="-122034.2" y2="7564.9" stroke="#d6d6d6" stroke-width="1"/>
<line x1="-452.6" y1="670.7" x2="-119024.4" y2="7572.1" stroke="#d6d6d6" stroke-width="1"/>
<line x1="-434.2" y1="670.6" x2="-116014.6" y2="7579.2" stroke="#d6d6d6" stroke-width="1"/>
<line x1="-416.0" y1="670.6" x2="-113004.7" y2="7586.3" stroke="#d6d6d6" stroke-width="1"/>
<line x1="-397.8" y1="670.6" x2="-109994.9" y2="7593.4" stroke="#d6d6d6" stroke-width="1"/>
<line x1="-379.6" y1="670.6" x2="-106985.0" y2="7600.6" stroke="#d6d6d6" stroke-width="1"/>
<line x1="-361.5" y1="670.5" x2="-103975.2" y2="7607.7" stroke="#d6d6d6" stroke-width="1"/>
<line x1="-343.5" y1="670.5" x2="-100965.4" y2="7614.8" stroke="#d6d6d6" stroke-width="1"/>
<line x1="-325.6" y1="670.5" x2="-97955.5" y2="7622.0" stroke="#d6d6d6" stroke-width="1"/>
<line x1="-307.7" y1="670.5" x2="-94945.7" y2="7629.1" stroke="#d6d6d6" stroke-width="1"/>
<line x1="-289.8" y1="670.4" x2="-91935.8" y2="7636.2" stroke="#d6d6d6" stroke-width="1"/>
<line x1="-272.0" y1="670.4" x2="-88926.0" y2="7643.3" stroke="#d6d6d6" stroke-width="1"/>
<line x1="-254.3" y1="670.4" x2="-85916.2" y2="7650.5" stroke="#d6d6d6" stroke-width="1"/>
<line x1="-236.7" y1="670.4" x2="-82906.3" y2="7657.6" stroke="#d6d6d6" stroke-width="1"/>
<line x1="-219.1" y1="670.3" x2="-79896.5" y2="7664.7" stroke="#d6d6d6" stroke-width="1"/>
<line x1="-201.5" y1="670.3" x2="-76886.6" y2="7671.9" stroke="#d6d6d6" stroke-width="1"/>
<line x1="-184.0" y1="670.3" x2="-73876.8" y2="7679.0" stroke="#d6d6d6" stroke-width="1"/>
<line x1="-166.6" y1="670.3" x2="-70867.0" y2="7686.1" stroke="#d6d6d6" stroke-width="1"/>
<line x1="-149.2" y1="670.2" x2="-67857.1" y2="7693.2" stroke="#d6d6d6" stroke-width="1"/>
<line x1="-131.9" y1="670.2" x2="-64847.3" y2="7700.4" stroke="#d6d6d6" stroke-width="1"/>
<line x1="-114.6" y1="670.2" x2="-61837.5" y2="7707.5" stroke="#d6d6d6" stroke-width="1"/>
<line x1="-97.4" y1="670.2" x2="-58827.6" y2="7714.6" stroke="#d6d6d6" stroke-width="1"/>
<line x1="-80.3" y1="670.1" x2="-55817.8" y2="7721.8" stroke="#d6d6d6" stroke-width="1"/>
<line x1="-63.2" y1="670.1" x2="-52807.9" y2="7728.9" stroke="#d6d6d6" stroke-width="1"/>
<line x1="-46.2" y1="670.1" x2="-49798.1" y2="7736.0" stroke="#d6d6d6" stroke-width="1"/>
<line x1="-29.2" y1="670.1" x2="-46788.3" y2="7743.1" stroke="#d6d6d6" stroke-width="1"/>
<line x1="-12.3" y1="670.0" x2="-39270.2" y2="7021.0" stroke="#d6d6d6" stroke-width="1"/>
<line x1="4.6" y1="670.0" x2="-28823.3" y2="5681.0" stroke="#d6d6d6" stroke-width="1"/>
<line x1="21.4" y1="670.0" x2="-22009.5" y2="4807.1" stroke="#d6d6d6" stroke-width="1"/>
<line x1="38.2" y1="670.0" x2="-17214.3" y2="4192.0" stroke="#d6d6d6" stroke-width="1"/>
<line x1="54.9" y1="669.9" x2="-13656.5" y2="3735.7" stroke="#d6d6d6" stroke-width="1"/>
<line x1="71.5" y1="669.9" x2="-10911.8" y2="3383.6" stroke="#d6d6d6" stroke-width="1"/>
<line x1="88.1" y1="669.9" x2="-8730.0" y2="3103.8" stroke="#d6d6d6" stroke-width="1"/>
<line x1="104.7" y1="669.9" x2="-6954.2" y2="2876.0" stroke="#d6d6d6" stroke-width="1"/>
<line x1="121.1" y1="669.8" x2="-5480.6" y2="2687.0" stroke="#d6d6d6" stroke-width="1"/>
<line x1="137.6" y1="669.8" x2="-4238.1" y2="2527.6" stroke="#d6d6d6" stroke-width="1"/>
<line x1="154.0" y1="669.8" x2="-3176.3" y2="2391.5" stroke="#d6d6d6" stroke-width="1"/>
<line x1="170.3" y1="669.8" x2="-2258.5" y2="2273.7" stroke="#d6d6d6" stroke-width="1"/>
<line x1="186.6" y1="669.7" x2="-1457.3" y2="2171.0" stroke="#d6d6d6" stroke-width="1"/>
<line x1="202.8" y1="669.7" x2="-751.7" y2="2080.5" stroke="#d6d6d6" stroke-width="1"/>
<line x1="219.0" y1="669.7" x2="-125.6" y2="2000.2" stroke="#d6d6d6" stroke-width="1"/>
<line x1="235.1" y1="669.7" x2="433.7" y2="1928.4" stroke="#d6d6d6" stroke-width="1"/>
<line x1="251.2" y1="669.7" x2="936.4" y2="1864.0" stroke="#d6d6d6" stroke-width="1"/>
<line x1="267.2" y1="669.6" x2="1390.6" y2="1805.7" stroke="#d6d6d6" stroke-width="1"/>
<line x1="283.2" y1="669.6" x2="1803.1" y2="1752.8" stroke="#d6d6d6" stroke-width="1"/>
<line x1="299.1" y1="669.6" x2="2179.3" y2="1704.5" stroke="#d6d6d6" stroke-width="1"/>
<line x1="315.0" y1="669.6" x2="2523.8" y2="1660.3" stroke="#d6d6d6" stroke-width="1"/>
<line x1="330.8" y1="669.5" x2="2840.5" y2="1619.7" stroke="#d6d6d6" stroke-width="1"/>
<line x1="346.6" y1="669.5" x2="3132.6" y2="1582.3" stroke="#d6d6d6" stroke-width="1"/>
<line x1="362.3" y1="669.5" x2="3402.8" y2="1547.6" stroke="#d6d6d6" stroke-width="1"/>
<line x1="377.9" y1="669.5" x2="3653.6" y2="1515.4" stroke="#d6d6d6" stroke-width="1"/>
<line x1="393.6" y1="669.4" x2="3886.9" y2="1485.5" stroke="#d6d6d6" stroke-width="1"/>
<line x1="409.1" y1="669.4" x2="4104.6" y2="1457.6" stroke="#d6d6d6" stroke-width="1"/>
<line x1="424.7" y1="669.4" x2="4308.1" y2="1431.5" stroke="#d6d6d6" stroke-width="1"/>
<line x1="440.1" y1="669.4" x2="4498.7" y2="1407.0" stroke="#d6d6d6" stroke-width="1"/>
<line x1="455.6" y1="669.4" x2="4677.8" y2="1384.1" stroke="#d6d6d6" stroke-width="1"/>
<line x1="471.0" y1="669.3" x2="4846.2" y2="1362.5" stroke="#d6d6d6" stroke-width="1"/>
<line x1="486.3" y1="669.3" x2="5004.9" y2="1342.1" stroke="#d6d6d6" stroke-width="1"/>
<line x1="501.6" y1="669.3" x2="5154.7" y2="1322.9" stroke="#d6d6d6" stroke-width="1"/>
<line x1="516.8" y1="669.3" x2="5296.4" y2="1304.7" stroke="#d6d6d6" stroke-width="1"/>
<line x1="532.0" y1="669.2" x2="5430.6" y2="1287.5" stroke="#d6d6d6" stroke-width="1"/>
<line x1="547.2" y1="669.2" x2="5557.9" y2="1271.2" stroke="#d6d6d6" stroke-width="1"/>
<line x1="562.3" y1="669.2" x2="5678.7" y2="1255.7" stroke="#d6d6d6" stroke-width="1"/>
<line x1="577.3" y1="669.2" x2="5793.7" y2="1240.9" stroke="#d6d6d6" stroke-width="1"/>
<line x1="592.3" y1="669.2" x2="5903.1" y2="1226.9" stroke="#d6d6d6" stroke-width="1"/>
<line x1="607.3" y1="669.1" x2="6007.4" y2="1213.5" stroke="#d6d6d6" stroke-width="1"/>
<line x1="622.2" y1="669.1" x2="6106.9" y2="1200.8" stroke="#d6d6d6" stroke-width="1"/>
<line x1="637.1" y1="669.1" x2="6202.0" y2="1188.6" stroke="#d6d6d6" stroke-width="1"/>
<line x1="651.9" y1="669.1" x2="6292.9" y2="1176.9" stroke="#d6d6d6" stroke-width="1"/>
<line x1="666.7" y1="669.0" x2="6380.0" y2="1165.7" stroke="#d6d6d6" stroke-width="1"/>
<line x1="681.4" y1="669.0" x2="6463.3" y2="1155.1" stroke="#d6d6d6" stroke-width="1"/>
<line x1="696.1" y1="669.0" x2="6543.3" y2="1144.8" stroke="#d6d6d6" stroke-width="1"/>
<line x1="710.7" y1="669.0" x2="6620.1" y2="1134.9" stroke="#d6d6d6" stroke-width="1"/>
<line x1="725.3" y1="669.0" x2="6693.8" y2="1125.5" stroke="#d6d6d6" stroke-width="1"/>
<line x1="739.9" y1="668.9" x2="6764.7" y2="1116.4" stroke="#d6d6d6" stroke-width="1"/>
<line x1="754.4" y1="668.9" x2="6832.9" y2="1107.7" stroke="#d6d6d6" stroke-width="1"/>
<line x1="768.9" y1="668.9" x2="6898.5" y2="1099.2" stroke="#d6d6d6" stroke-width="1"/>
<line x1="783.3" y1="668.9" x2="6961.8" y2="1091.1" stroke="#d6d6d6" stroke-width="1"/>
<line x1="797.7" y1="668.9" x2="7022.8" y2="1083.3" stroke="#d6d6d6" stroke-width="1"/>
<line x1="812.0" y1="668.8" x2="7081.6" y2="1075.7" stroke="#d6d6d6" stroke-width="1"/>
<line x1="826.3" y1="668.8" x2="7138.4" y2="1068.5" stroke="#d6d6d6" stroke-width="1"/>
<line x1="840.5" y1="668.8" x2="7193.3" y2="1061.4" stroke="#d6d6d6" stroke-width="1"/>
<line x1="854.8" y1="668.8" x2="7246.3" y2="1054.6" stroke="#d6d6d6" stroke-width="1"/>
<line x1="868.9" y1="668.8" x2="7297.6" y2="1048.0" stroke="#d6d6d6" stroke-width="1"/>
<line x1="883.1" y1="668.7" x2="7347.2" y2="1041.7" stroke="#d6d6d6" stroke-width="1"/>
<line x1="897.1" y1="668.7" x2="7395.3" y2="1035.5" stroke="#d6d6d6" stroke-width="1"/>
<line x1="911.2" y1="668.7" x2="7441.8" y2="1029.6" stroke="#d6d6d6" stroke-width="1"/>
<line x1="925.2" y1="668.7" x2="7486.9" y2="1023.8" stroke="#d6d6d6" stroke-width="1"/>
<line x1="939.1" y1="668.7" x2="7530.6" y2="1018.2" stroke="#d6d6d6" stroke-width="1"/>
<line x1="953.1" y1="668.6" x2="7573.1" y2="1012.7" stroke="#d6d6d6" stroke-width="1"/>
<line x1="966.9" y1="668.6" x2="7614.2" y2="1007.4" stroke="#d6d6d6" stroke-width="1"/>
<line x1="980.8" y1="668.6" x2="7654.2" y2="1002.3" stroke="#d6d6d6" stroke-width="1"/>
<line x1="994.6" y1="668.6" x2="7693.0" y2="997.3" stroke="#d6d6d6" stroke-width="1"/>
<line x1="1008.3" y1="668.6" x2="7730.7" y2="992.5" stroke="#d6d6d6" stroke-width="1"/>
<line x1="1022.0" y1="668.5" x2="7767.4" y2="987.8" stroke="#d6d6d6" stroke-width="1"/>
<line x1="1035.7" y1="668.5" x2="7803.1" y2="983.2" stroke="#d6d6d6" stroke-width="1"/>
<line x1="1049.3" y1="668.5" x2="7837.8" y2="978.8" stroke="#d6d6d6" stroke-width="1"/>
<line x1="1062.9" y1="668.5" x2="7871.5" y2="974.4" stroke="#d6d6d6" stroke-width="1"/>
<line x1="1076.5" y1="668.5" x2="7904.4" y2="970.2" stroke="#d6d6d6" stroke-width="1"/>
<line x1="1090.0" y1="668.4" x2="7936.4" y2="966.1" stroke="#d6d6d6" stroke-width="1"/>
<line x1="1103.5" y1="668.4" x2="7967.6" y2="962.1" stroke="#d6d6d6" stroke-width="1"/>
<line x1="1116.9" y1="668.4" x2="7998.0" y2="958.2" stroke="#d6d6d6" stroke-width="1"/>
<line x1="1130.3" y1="668.4" x2="8027.7" y2="954.4" stroke="#d6d6d6" stroke-width="1"/>
<line x1="1143.7" y1="668.4" x2="8056.6" y2="950.7" stroke="#d6d6d6" stroke-width="1"/>
<line x1="1157.0" y1="668.3" x2="8084.8" y2="947.1" stroke="#d6d6d6" stroke-width="1"/>
<line x1="1170.3" y1="668.3" x2="8112.3" y2="943.6" stroke="#d6d6d6" stroke-width="1"/>
<line x1="1183.5" y1="668.3" x2="8139.2" y2="940.1" stroke="#d6d6d6" stroke-width="1"/>
<line x1="1196.7" y1="668.3" x2="8165.4" y2="936.7" stroke="#d6d6d6" stroke-width="1"/>
<line x1="1209.9" y1="668.3" x2="8191.0" y2="933.5" stroke="#d6d6d6" stroke-width="1"/>
<line x1="1223.0" y1="668.2" x2="8216.0" y2="930.2" stroke="#d6d6d6" stroke-width="1"/>
<line x1="1236.1" y1="668.2" x2="8240.5" y2="927.1" stroke="#d6d6d6" stroke-width="1"/>
<line x1="1249.2" y1="668.2" x2="8264.4" y2="924.0" stroke="#d6d6d6" stroke-width="1"/>
<line x1="1262.2" y1="668.2" x2="8287.8" y2="921.0" stroke="#d6d6d6" stroke-width="1"/>
<line x1="1275.2" y1="668.2" x2="8310.6" y2="918.1" stroke="#d6d6d6" stroke-width="1"/>
<line x1="1288.1" y1="668.1" x2="8333.0" y2="915.2" stroke="#d6d6d6" stroke-width="1"/>
<line x1="1301.0" y1="668.1" x2="8354.9" y2="912.4" stroke="#d6d6d6" stroke-width="1"/>
<line x1="1313.9" y1="668.1" x2="8376.3" y2="909.7" stroke="#d6d6d6" stroke-width="1"/>
<line x1="1326.7" y1="668.1" x2="8397.2" y2="907.0" stroke="#d6d6d6" stroke-width="1"/>
<line x1="1339.5" y1="668.1" x2="8417.7" y2="904.4" stroke="#d6d6d6" stroke-width="1"/>
<line x1="1352.3" y1="668.1" x2="8437.8" y2="901.8" stroke="#d6d6d6" stroke-width="1"/>
<line x1="1365.0" y1="668.0" x2="8457.5" y2="899.3" stroke="#d6d6d6" stroke-width="1"/>
<line x1="1377.7" y1="668.0" x2="8476.8" y2="896.8" stroke="#d6d6d6" stroke-width="1"/>
<line x1="1390.3" y1="668.0" x2="8495.7" y2="894.4" stroke="#d6d6d6" stroke-width="1"/>
<line x1="1403.0" y1="668.0" x2="8514.2" y2="892.0" stroke="#d6d6d6" stroke-width="1"/>
<line x1="1415.5" y1="668.0" x2="8532.4" y2="889.7" stroke="#d6d6d6" stroke-width="1"/>
<line x1="1428.1" y1="667.9" x2="8550.2" y2="887.4" stroke="#d6d6d6" stroke-width="1"/>
<line x1="1440.6" y1="667.9" x2="8567.7" y2="885.1" stroke="#d6d6d6" stroke-width="1"/>
<line x1="1453.1" y1="667.9" x2="8584.8" y2="882.9" stroke="#d6d6d6" stroke-width="1"/>
<line x1="1465.5" y1="667.9" x2="8601.6" y2="880.8" stroke="#d6d6d6" stroke-width="1"/>
<line x1="1477.9" y1="667.9" x2="8618.1" y2="878.7" stroke="#d6d6d6" stroke-width="1"/>
<line x1="1490.3" y1="667.9" x2="8634.3" y2="876.6" stroke="#d6d6d6" stroke-width="1"/>
<line x1="1502.6" y1="667.8" x2="8650.2" y2="874.6" stroke="#d6d6d6" stroke-width="1"/>
<line x1="1514.9" y1="667.8" x2="8665.8" y2="872.6" stroke="#d6d6d6" stroke-width="1"/>
<line x1="1527.2" y1="667.8" x2="8681.1" y2="870.6" stroke="#d6d6d6" stroke-width="1"/>
<line x1="1539.4" y1="667.8" x2="8696.1" y2="868.7" stroke="#d6d6d6" stroke-width="1"/>
<line x1="1551.6" y1="667.8" x2="8710.9" y2="866.8" stroke="#d6d6d6" stroke-width="1"/>
<line x1="1563.8" y1="667.7" x2="8725.4" y2="864.9" stroke="#d6d6d6" stroke-width="1"/>
<line x1="1575.9" y1="667.7" x2="8739.7" y2="863.1" stroke="#d6d6d6" stroke-width="1"/>
<line x1="1588.0" y1="667.7" x2="8753.7" y2="861.3" stroke="#d6d6d6" stroke-width="1"/>
<line x1="1600.1" y1="667.7" x2="8767.5" y2="859.5" stroke="#d6d6d6" stroke-width="1"/>
<line x1="1612.1" y1="667.7" x2="8781.0" y2="857.8" stroke="#d6d6d6" stroke-width="1"/>
<line x1="1624.2" y1="667.7" x2="8794.3" y2="856.1" stroke="#d6d6d6" stroke-width="1"/>
<line x1="1636.1" y1="667.6" x2="8807.4" y2="854.4" stroke="#d6d6d6" stroke-width="1"/>
<line x1="1648.1" y1="667.6" x2="8820.3" y2="852.7" stroke="#d6d6d6" stroke-width="1"/>
<line x1="1660.0" y1="667.6" x2="8832.9" y2="851.1" stroke="#d6d6d6" stroke-width="1"/>
<line x1="1671.8" y1="667.6" x2="8845.4" y2="849.5" stroke="#d6d6d6" stroke-width="1"/>
<line x1="1683.7" y1="667.6" x2="8857.7" y2="848.0" stroke="#d6d6d6" stroke-width="1"/>
<line x1="1695.5" y1="667.6" x2="8869.7" y2="846.4" stroke="#d6d6d6" stroke-width="1"/>
<line x1="1707.2" y1="667.5" x2="8881.6" y2="844.9" stroke="#d6d6d6" stroke-width="1"/>
<line x1="1719.0" y1="667.5" x2="8893.3" y2="843.4" stroke="#d6d6d6" stroke-width="1"/>
<line x1="1730.7" y1="667.5" x2="8904.8" y2="841.9" stroke="#d6d6d6" stroke-width="1"/>
<line x1="1742.4" y1="667.5" x2="8916.1" y2="840.5" stroke="#d6d6d6" stroke-width="1"/>
<line x1="1754.0" y1="667.5" x2="8927.2" y2="839.0" stroke="#d6d6d6" stroke-width="1"/>
<line x1="1765.6" y1="667.5" x2="8938.2" y2="837.6" stroke="#d6d6d6" stroke-width="1"/>
<line x1="1777.2" y1="667.4" x2="8949.0" y2="836.2" stroke="#d6d6d6" stroke-width="1"/>
<line x1="1788.8" y1="667.4" x2="8959.6" y2="834.9" stroke="#d6d6d6" stroke-width="1"/>
<line x1="1800.3" y1="667.4" x2="8970.1" y2="833.5" stroke="#d6d6d6" stroke-width="1"/>
<line x1="1811.8" y1="667.4" x2="8980.5" y2="832.2" stroke="#d6d6d6" stroke-width="1"/>
<line x1="1823.3" y1="667.4" x2="8990.6" y2="830.9" stroke="#d6d6d6" stroke-width="1"/>
<line x1="1834.7" y1="667.4" x2="9000.7" y2="829.6" stroke="#d6d6d6" stroke-width="1"/>
<line x1="1846.1" y1="667.3" x2="9010.5" y2="828.3" stroke="#d6d6d6" stroke-width="1"/>
<line x1="1857.5" y1="667.3" x2="9020.3" y2="827.1" stroke="#d6d6d6" stroke-width="1"/>
<line x1="1868.8" y1="667.3" x2="9029.9" y2="825.9" stroke="#d6d6d6" stroke-width="1"/>
<line x1="1880.1" y1="667.3" x2="9039.4" y2="824.6" stroke="#d6d6d6" stroke-width="1"/>
<line x1="1891.4" y1="667.3" x2="9048.7" y2="823.4" stroke="#d6d6d6" stroke-width="1"/>
<line x1="1902.6" y1="667.3" x2="9057.9" y2="822.3" stroke="#d6d6d6" stroke-width="1"/>
<line x1="1913.8" y1="667.2" x2="9067.0" y2="821.1" stroke="#d6d6d6" stroke-width="1"/>
<line x1="1925.0" y1="667.2" x2="9075.9" y2="820.0" stroke="#d6d6d6" stroke-width="1"/>
<line x1="1936.2" y1="667.2" x2="9084.7" y2="818.8" stroke="#d6d6d6" stroke-width="1"/>
<line x1="1947.3" y1="667.2" x2="9093.4" y2="817.7" stroke="#d6d6d6" stroke-width="1"/>
<line x1="1958.4" y1="667.2" x2="9102.0" y2="816.6" stroke="#d6d6d6" stroke-width="1"/>
<line x1="1969.5" y1="667.2" x2="9110.5" y2="815.5" stroke="#d6d6d6" stroke-width="1"/>
<line x1="1980.5" y1="667.1" x2="9118.8" y2="814.5" stroke="#d6d6d6" stroke-width="1"/>
<rect x="0" y="668" width="1920" height="80" fill="url(#fshade)"/>
</g>
<line x1="355.3" y1="537" x2="353.6" y2="848" stroke="#5b8df2" stroke-width="1.4"/>
<line x1="353.6" y1="848" x2="591" y2="842.5" stroke="#3f9a24" stroke-width="1.6"/>
<line x1="353.6" y1="848" x2="414.7" y2="955.6" stroke="#ee5a4a" stroke-width="1.4"/>
<polygon points="361,4.5 449.3,4.5 448.4,178 361,176" fill="#fca900" stroke="#5c6166" stroke-width="1"/>
<polygon points="0,366 260,169.5 361,174.4 448.4,177.3 453,177.3 705,396 705,445 455,445 455,535.6 257,535 257,520 0,520" fill="#fd5500" stroke="#5c6166" stroke-width="1"/>
<polygon points="0,538 153,540 153,560 0,557.5" fill="#fd5500" stroke="#5c6166" stroke-width="1"/>
<defs><linearGradient id="colg" x1="0" y1="0" x2="1" y2="0"><stop offset="0" stop-color="#fca900"/><stop offset="0.55" stop-color="#f7a500"/><stop offset="1" stop-color="#d98f00"/></linearGradient></defs>
<polygon points="265,4.5 349.4,4.5 349.4,344.2 263.3,342.7" fill="#fca900" stroke="#5c6166" stroke-width="1"/>
<polygon points="335.8,4.5 346.4,4.5 346.4,344 335.3,344" fill="url(#colg)"/>
<line x1="269.5" y1="4.5" x2="268" y2="342.8" stroke="#5c6166" stroke-width="0.9"/>
<line x1="336.5" y1="4.5" x2="335.5" y2="344" stroke="#5c6166" stroke-width="0.9"/>
<line x1="346.6" y1="4.5" x2="346.4" y2="344" stroke="#5c6166" stroke-width="0.9"/>
<rect x="349.4" y="4.5" width="11" height="331" fill="#f5a300"/>
<rect x="356.1" y="4.5" width="4.2" height="351" fill="#d99000"/>
<line x1="349.4" y1="4.5" x2="349.4" y2="335.5" stroke="#5c6166" stroke-width="0.8"/>
<line x1="352.5" y1="4.5" x2="352.5" y2="335.5" stroke="#5c6166" stroke-width="0.8"/>
<line x1="356.1" y1="4.5" x2="356.1" y2="355" stroke="#5c6166" stroke-width="0.8"/>
<line x1="360.3" y1="4.5" x2="360.3" y2="355" stroke="#5c6166" stroke-width="0.8"/>
<polygon points="346.4,336 356.1,336 351.7,344.2 346.4,344.2" fill="#d99000" stroke="#5c6166" stroke-width="0.7"/>
<polygon points="356.1,338.5 351.7,344.2 351.7,362.5 360.3,362.5 360.3,355.5 356.1,355.5" fill="#fff"/>
<line x1="356.3" y1="355.5" x2="356.2" y2="362.5" stroke="#5b8df2" stroke-width="1.2"/>
<polygon points="285,360 426,363.3 426,535.6 285,535" fill="#fd5500" stroke="#5c6166" stroke-width="1.2"/>
<circle cx="316" cy="405" r="8.7" fill="#6a6a6a"/><circle cx="316.6" cy="406.0" r="7.7" fill="#fff"/>
<circle cx="395.5" cy="406.5" r="8.7" fill="#6a6a6a"/><circle cx="396.1" cy="407.5" r="7.7" fill="#fff"/>
<circle cx="316" cy="491.5" r="8.7" fill="#6a6a6a"/><circle cx="316.6" cy="492.5" r="7.7" fill="#fff"/>
<circle cx="395.5" cy="492.5" r="8.7" fill="#6a6a6a"/><circle cx="396.1" cy="493.5" r="7.7" fill="#fff"/>
<defs><linearGradient id="flg" x1="0" y1="0" x2="0" y2="1"><stop offset="0" stop-color="#fca900"/><stop offset="0.6" stop-color="#f2a200"/><stop offset="1" stop-color="#d28a00"/></linearGradient></defs>
<polygon points="0,429 255,427 256.6,516.8 0,518.75" fill="#fca900" stroke="#5c6166" stroke-width="1"/>
<polygon points="0,518.75 256.6,516.8 256.6,525.4 0,526.6" fill="url(#flg)"/>
<polygon points="0,526.6 258.2,525.4 258.2,532.4 0,534.4" fill="#fca900"/>
<polygon points="0,534.4 256.6,532.4 256.6,536.7 0,538.3" fill="#dc9200"/>
<polygon points="0,538.3 256.6,536.7 256.6,540.6 0,542.6" fill="url(#flg)"/>
<path d="M0,518.75 L256.6,516.8 M0,526.6 L258.2,525.4 L258.2,532.4 M0,534.4 L258.2,532.4 M0,538.3 L256.6,536.7 M0,542.6 L256.6,540.6 L256.6,532.4 M256.6,525.4 L256.6,516.8" fill="none" stroke="#5c6166" stroke-width="1"/>
<polygon points="455.5,431 932,452 932,527 591,524.4 452.3,518.75" fill="#fca900" stroke="#5c6166" stroke-width="1"/>
<polygon points="452.3,518.75 600,524.8 600,532.2 460,527.2" fill="url(#flg)"/>
<polygon points="460,527.2 600,532.2 600,538.7 460,534.7" fill="#fca900"/>
<polygon points="445,537.5 600,541.8 600,546.3 442,542.2" fill="#dc9200"/>
<polygon points="460,534.7 600,538.7 600,541.8 445,537.5" fill="url(#flg)"/>
<polygon points="452.3,518.75 460,527.2 460,534.7 452.3,537 445,537.5 442,542.2" fill="#e09600"/>
<path d="M452.3,518.75 L600,524.8 M460,527.2 L600,532.2 M460,534.7 L600,538.7 M445,537.5 L600,541.8 M442,542.2 L548.4,545.9 M452.3,518.75 L452.3,531 L442,537 L442,542.2 M460,527.2 L460,534.7 L445,537.5" fill="none" stroke="#5c6166" stroke-width="0.9"/>
<polygon points="548.4,542.7 600,543 600,562.8 548.4,562.8" fill="#fd5500" stroke="#5c6166" stroke-width="1"/>
<polygon points="1745,490.6 1921,498 1921,574 1745,567" fill="#fca900" stroke="#5c6166" stroke-width="1"/>
<polygon points="1755,567.4 1920,574 1920,581 1755,575.5" fill="url(#flg)"/>
<polygon points="1755,575.5 1920,581 1920,587.7 1755,582.3" fill="#fca900"/>
<polygon points="1755,582.3 1920,587.7 1920,595 1755,589" fill="#dc9200"/>
<path d="M1755,567.4 L1920,574 M1755,575.5 L1920,581 M1755,582.3 L1920,587.7 M1755,586.3 L1920,591.8 M1755,589 L1920,595" fill="none" stroke="#5c6166" stroke-width="1"/>
<polygon points="1881,4.5 1920,4.5 1920,52" fill="#e9a000" stroke="#5c6166" stroke-width="0.8"/>
</svg>
<div class="abs" style="left:0;top:0;width:1920px;height:4.2px;background:#d0d0d0;border-bottom:1px solid #a0a0a0"></div>
<div class="abs" style="left:348.5px;top:0;width:107px;height:3.4px;background:#fff;border-left:1px solid #999;border-right:1px solid #999"></div>
<div class="abs" style="left:92px;top:0;width:1px;height:3.5px;background:#888"></div>
<div class="abs" style="left:480.5px;top:0;width:1px;height:3.5px;background:#888"></div>
<div class="abs" style="left:3px;top:0;width:1.2px;height:1.2px;background:#302050"></div>
<div class="abs" style="left:144px;top:0;width:1.2px;height:1.2px;background:#302050"></div>
<div class="abs" style="left:365px;top:0;width:1.2px;height:1.2px;background:#302050"></div>
<div class="panel" style="left:560px;top:11px;width:612px;height:37.5px;border-radius:3px"></div>
<svg class="abs" style="left:0;top:0" width="1200" height="50"><path d="M571,25.5 L571,36.5 L581.5,36.5 Z" fill="#a5a5a5"/><path d="M575.5,32 Q582,23 587,33 L587.5,36.5" fill="none" stroke="#a5a5a5" stroke-width="4.2"/><path d="M624,25.5 L624,36.5 L613.5,36.5 Z" fill="#a5a5a5"/><path d="M619.5,32 Q613,23 608,33 L607.5,36.5" fill="none" stroke="#a5a5a5" stroke-width="4.2"/><line x1="635.5" y1="17" x2="635.5" y2="42.5" stroke="#c3cbd3" stroke-width="1"/><line x1="693" y1="17" x2="693" y2="42.5" stroke="#c3cbd3" stroke-width="1"/><line x1="874.7" y1="17" x2="874.7" y2="42.5" stroke="#c3cbd3" stroke-width="1"/><line x1="1003" y1="17" x2="1003" y2="42.5" stroke="#c3cbd3" stroke-width="1"/><line x1="1044" y1="17" x2="1044" y2="42.5" stroke="#c3cbd3" stroke-width="1"/><path d="M646.5,27 L651.5,22 L663,22 L663,28 M646.5,27 L646.5,39.2 L654,39.2 M646.5,39.2 L651.5,34.5 M651.5,22 L651.5,34.5 L655,34.5" fill="none" stroke="#687d8f" stroke-width="1.1"/><path d="M655,28 L661,28 L661,39.5 L655,39.5 Z M655.5,27.5 L660.5,21.5 L667.5,21.5 L661.5,27.5 Z M661.8,28 L667.8,22 L667.8,33.5 L661.8,39.5 Z" fill="#687d8f"/><polygon points="680.6,28.25 686.8000000000001,28.25 683.7,33.75" fill="#111"/><path d="M704,24 L714,24 L716,21.8 L723.8,21.8 L723.8,37.3 L704,37.3 Z" fill="#687d8f"/><path d="M715.5,23.2 L722.8,23.2" stroke="#fff" stroke-width="1.2"/><rect x="740" y="29.5" width="20" height="3" rx="1" fill="#687d8f"/><rect x="740" y="33.5" width="20" height="3.8" rx="1" fill="#687d8f"/><path d="M747,20.3 L753,20.3 L753,25 L756.5,25 L750,31.5 L743.5,25 L747,25 Z" fill="#fff" stroke="#687d8f" stroke-width="1.2"/><polygon points="773.9,28.25 780.1,28.25 777,33.75" fill="#111"/><path d="M795,21 L804.5,21 L809,25.5 L809,38.6 L795,38.6 Z" fill="#687d8f"/><path d="M804,21.5 L804,25.5 L808.5,25.5 Z" fill="#fff"/><path d="M800.5,27.8 L810,27.8 L810,24.5 L815.5,30.2 L810,35.8 L810,32.5 L800.5,32.5 Z" fill="#687d8f" stroke="#fff" stroke-width="1.1"/><polygon points="826.6,28.25 832.8000000000001,28.25 829.7,33.75" fill="#111"/><rect x="844" y="26.5" width="20" height="10" rx="1.5" fill="#687d8f"/><path d="M849.5,21 L857.5,21 L860.5,24 L860.5,29 L849.5,29 Z" fill="#fff" stroke="#687d8f" stroke-width="1.1"/><rect x="848" y="33" width="12" height="2" fill="#fff"/><rect x="849" y="35" width="10.5" height="5.7" fill="#687d8f"/><path d="M888.5,20 Q893,29 896.5,35 M901.5,20 Q897,29 893.5,35" fill="none" stroke="#a5a5a5" stroke-width="1.8"/><circle cx="890.5" cy="37.3" r="2.6" fill="none" stroke="#a5a5a5" stroke-width="1.3"/><circle cx="899.5" cy="37.3" r="2.6" fill="none" stroke="#a5a5a5" stroke-width="1.3"/><path d="M920.5,19.8 L929,19.8 L932,22.8 L932,33.5 L920.5,33.5 Z" fill="#fff" stroke="#a5a5a5" stroke-width="1.1"/><path d="M928.5,24.5 L936.5,24.5 L939.5,27.5 L939.5,39.3 L928.5,39.3 Z" fill="#fff" stroke="#a5a5a5" stroke-width="1.1"/><rect x="956.7" y="19.5" width="15" height="16.5" fill="#a5a5a5"/><rect x="960.5" y="17.5" width="7.5" height="4" fill="#a5a5a5"/><rect x="961" y="19.5" width="7" height="2" fill="#e6eaee"/><path d="M964.3,25 L971.5,25 L975.5,29 L975.5,39.3 L964.3,39.3 Z" fill="#fff" stroke="#a5a5a5" stroke-width="1.1"/><polygon points="990.5,28.25 996.7,28.25 993.6,33.75" fill="#111"/><path d="M1011,19 L1017,19 L1018.5,17 L1022,17 L1022,25 L1011,25 Z" fill="#687d8f"/><path d="M1022,21 L1025,21 L1025,38 L1029,38 M1025,27 L1029,27" fill="none" stroke="#687d8f" stroke-width="1.1"/><rect x="1029" y="22.3" width="6.8" height="8.2" fill="#fff" stroke="#687d8f" stroke-width="1.1"/><rect x="1029" y="32.5" width="6.8" height="8.8" fill="#fff" stroke="#687d8f" stroke-width="1.1"/><rect x="1031.5" y="23.5" width="1.2" height="6" fill="#687d8f"/><rect x="1033.3" y="35" width="2.5" height="3" fill="#687d8f"/><rect x="1061" y="25.3" width="16.2" height="14.2" fill="#687d8f"/><rect x="1054" y="21" width="13" height="15" fill="#fff" stroke="#687d8f" stroke-width="1.4"/><rect x="1055.8" y="22.5" width="4.2" height="12" fill="#687d8f"/><rect x="1061.5" y="22.5" width="4" height="5" fill="#687d8f"/><rect x="1061.5" y="28.5" width="4" height="6" fill="#687d8f"/><rect x="1067.8" y="27" width="8" height="3" fill="#fff"/><rect x="1067.8" y="31.5" width="8" height="2" fill="#dfe4e8"/><polygon points="1088.9,28.25 1095.1,28.25 1092,33.75" fill="#111"/><path d="M1109,37.5 L1119.5,27" stroke="#687d8f" stroke-width="3.6" stroke-linecap="round"/><path d="M1116.5,26 A6,6 0 0 1 1123.5,19.2 L1120.5,23 L1122,25 L1124.5,25.5 L1128,22.5 A6,6 0 0 1 1120,29.5 Z" fill="#687d8f"/><circle cx="1109.8" cy="36.7" r="0.9" fill="#e6eaee"/><circle cx="1152" cy="29.8" r="9.9" fill="#687d8f"/><text x="1152" y="34.6" font-family="Liberation Sans" font-weight="bold" font-size="14" fill="#fff" text-anchor="middle">?</text></svg>
<div class="panel" style="left:1753px;top:11px;width:159px;height:175.5px"></div>
<div class="abs" style="left:1753px;top:20.5px;width:159px;text-align:center;font-size:13.5px;color:#1c1c24">Инструменты</div>
<div class="panel" style="left:1753px;top:195px;width:159px;height:72px"></div>
<div class="abs" style="left:1753px;top:203.5px;width:159px;text-align:center;font-size:13px;color:#1c1c24">Параметры</div>
<div class="abs" style="left:1797px;top:233px;width:107px;height:22px;background:#fff;border:1px solid #aab6c2"></div>
<div class="abs" style="left:1800px;top:236px;font-size:13px;color:#111">Ф-1.</div>
<svg class="abs" style="left:0;top:0" width="1920" height="280"><polygon points="1891.75,242.0 1898.25,242.0 1895,248.0" fill="#111"/><path d="M1771,238.5 L1788,238.5 L1788,250.5 L1771,250.5 L1767,244.5 Z" fill="#fff" stroke="#687d8f" stroke-width="1.4"/><text x="1779.5" y="248" font-family="Liberation Sans" font-weight="bold" font-size="8" fill="#111" text-anchor="middle">A1</text><rect x="1761" y="44.5" width="34" height="31.5" rx="2" fill="#cdd3da"/><path d="M1772.5,51.5 L1772.5,66 L1776,63 L1778.5,68 L1780.5,67 L1778,62 L1783,62 Z" fill="none" stroke="#687d8f" stroke-width="1.3" stroke-linejoin="round"/><path d="M1803.5,53 L1806,51 L1825,51 L1825,68 L1822.5,70.5 L1803.5,70.5 Z" fill="#687d8f"/><rect x="1804.8" y="53.3" width="17" height="16" fill="#fff"/><path d="M1847,52.5 L1849,50.8 L1855,50.8 L1855,68.5 L1853,70.5 L1847,70.5 Z" fill="#687d8f"/><rect x="1848.2" y="53" width="4" height="16.3" fill="#fff"/><path d="M1873.5,61.5 L1880,55.2 L1900,55.2 L1900,60.5 L1893.5,67 L1873.5,67 Z" fill="#687d8f"/><rect x="1874.8" y="62.5" width="17.5" height="3.3" fill="#fff"/><path d="M1765,95.5 L1771,89.2 L1791,89.2 L1791,94.5 L1785,100.8 L1765,100.8 Z" fill="#687d8f"/><rect x="1766.3" y="96.3" width="17.5" height="3.3" fill="#fff"/><path d="M1771.5,94.5 L1774.5,91 L1787,91 L1784,94.5 Z" fill="#fff"/><path d="M1806.5,99 L1819,86 L1823,86 L1823,89.5 L1810.5,102.5 L1806.5,102.5 Z" fill="#687d8f"/><rect x="1807.5" y="98.8" width="2.8" height="3" fill="#fff"/><path d="M1841,92.5 L1847.5,86 L1851.5,86.5 L1855,89.5 L1858.5,92.5 L1861.5,95.5 L1861.5,97.5 L1855.5,103 L1851.5,103 L1841,95 Z" fill="#687d8f"/><path d="M1842,93.5 L1852,101.3 L1855,101.3 L1852,99 L1846,94.3 L1846,93.5 Z" fill="#fff"/><path d="M1846.5,87.5 L1843.5,91.5 M1851,90 L1847.5,94 M1855.5,93.5 L1852,97.5" stroke="#fff" stroke-width="1"/><path d="M1876,91 L1880,87 L1897,96 L1894,101 L1876,101 Z" fill="#687d8f"/><path d="M1877,92 L1877,100 L1891,100 Z" fill="#fff"/><path d="M1770.2,119.5 L1772,117.6 L1786.5,117.6 L1786.5,136.5 L1784.5,138.5 L1770.2,138.5 Z" fill="#687d8f"/><rect x="1771.8" y="120" width="11.5" height="17" fill="#fff" stroke="#687d8f" stroke-width="0.8"/><rect x="1773.2" y="121.3" width="8.8" height="14.3" fill="#fff"/><rect x="1780.2" y="128.5" width="1.3" height="2.3" fill="#687d8f"/><path d="M1806.7,119.5 L1808.5,117.6 L1823,117.6 L1823,135.5 L1821,137.5 L1806.7,137.5 Z" fill="#687d8f"/><rect x="1808.3" y="120" width="11.8" height="16" fill="#fff" stroke="#687d8f" stroke-width="0.8"/><rect x="1810.8" y="122" width="1.5" height="12.3" fill="#687d8f"/><rect x="1814.3" y="122" width="4.2" height="4.5" fill="#687d8f"/><rect x="1814.3" y="128" width="4.2" height="6.3" fill="#687d8f"/><line x1="1842" y1="137" x2="1859" y2="120.5" stroke="#687d8f" stroke-width="1.2"/><path d="M1878,131 L1880,129 L1883,129 L1883,119 L1885,117.5 L1890,117.5 L1890,125.5 L1895.8,125.5 L1895.8,134.5 L1891,139.5 L1878,139.5 Z" fill="#687d8f"/><rect x="1879.2" y="131" width="11.5" height="7.3" fill="#fff"/><rect x="1884.2" y="119.3" width="3.8" height="9.5" fill="#fff"/><path d="M1766,164 L1773,155.5 L1790,155.5 L1790,166 L1785,170.5 L1775,170.5 L1771,171.5 L1766,171.5 Z" fill="#687d8f"/><rect x="1767" y="164.5" width="3.8" height="6" fill="#fff"/><rect x="1777" y="159.5" width="8" height="5.5" fill="#fff"/></svg>
<div class="dlg" style="left:591px;top:473.5px;width:823px;height:596.0px"></div>
<div class="abs" style="left:591px;top:473.5px;width:823px;height:20.5px;background:#fff;border-left:1px solid #d6dadf"></div>
<div class="abs" style="left:611px;top:478.5px;font-size:8.5px;color:#a098a4">Профили</div>
<div class="lst" style="left:599.6px;top:517.5px;width:132.6px;height:521.3px;border-left:none;border-top:none"></div>
<div class="abs" style="left:600.6px;top:677.9px;width:129.6px;height:14px;background:#e3e7eb;border-top:1px solid #b8c4ce"></div>
<div class="abs" style="left:600.6px;top:518.5px;width:129.6px;height:520px;overflow:hidden">
<div style="position:absolute;left:5px;top:2.9px;white-space:nowrap;color:#0c0810;font-size:8px;line-height:11px">а1. Фасонка 1.</div>
<div style="position:absolute;left:5px;top:18.8px;white-space:nowrap;color:#0c0810;font-size:8px;line-height:11px">а2. Фасонка 1.</div>
<div style="position:absolute;left:5px;top:34.6px;white-space:nowrap;color:#0c0810;font-size:8px;line-height:11px">а3. Фасонка 1.</div>
<div style="position:absolute;left:5px;top:50.4px;white-space:nowrap;color:#0c0810;font-size:8px;line-height:11px">а4. Фасонка 1.</div>
<div style="position:absolute;left:5px;top:66.3px;white-space:nowrap;color:#0c0810;font-size:8px;line-height:11px">Новый профиль</div>
<div style="position:absolute;left:5px;top:82.1px;white-space:nowrap;color:#0c0810;font-size:8px;line-height:11px">Р-2. Фасонка 1.</div>
<div style="position:absolute;left:5px;top:98.0px;white-space:nowrap;color:#0c0810;font-size:8px;line-height:11px">Р-2. Фасонка 2.</div>
<div style="position:absolute;left:5px;top:113.9px;white-space:nowrap;color:#0c0810;font-size:8px;line-height:11px">СТ-1. Фасонка 1.</div>
<div style="position:absolute;left:5px;top:129.7px;white-space:nowrap;color:#0c0810;font-size:8px;line-height:11px">Труба прямоугольная</div>
<div style="position:absolute;left:5px;top:145.5px;white-space:nowrap;color:#0c0810;font-size:8px;line-height:11px">Труба прямоугольная (1)</div>
<div style="position:absolute;left:5px;top:161.4px;white-space:nowrap;color:#0c0810;font-size:8px;line-height:11px">Ф-1. Фасонка 1.</div>
<div style="position:absolute;left:5px;top:177.2px;white-space:nowrap;color:#0c0810;font-size:8px;line-height:11px">Ф-1. Фасонка 2.</div>
<div style="position:absolute;left:5px;top:193.1px;white-space:nowrap;color:#0c0810;font-size:8px;line-height:11px">Ф-1. Фасонка 3.</div>
<div style="position:absolute;left:5px;top:208.9px;white-space:nowrap;color:#0c0810;font-size:8px;line-height:11px">Ф-1. Фасонка 4.</div>
<div style="position:absolute;left:5px;top:224.8px;white-space:nowrap;color:#0c0810;font-size:8px;line-height:11px">Ф-1. Фасонка 5.</div>
<div style="position:absolute;left:5px;top:240.6px;white-space:nowrap;color:#0c0810;font-size:8px;line-height:11px">Ф-1. Фасонка 6.</div>
<div style="position:absolute;left:5px;top:256.5px;white-space:nowrap;color:#0c0810;font-size:8px;line-height:11px">Фасонка прямоугольная с двумя отверстиями</div>
<div style="position:absolute;left:5px;top:272.3px;white-space:nowrap;color:#0c0810;font-size:8px;line-height:11px">Фасонка с 1 осью.</div>
<div style="position:absolute;left:5px;top:288.2px;white-space:nowrap;color:#0c0810;font-size:8px;line-height:11px">Фасонка с 1 осью. (1)</div>
<div style="position:absolute;left:5px;top:304.0px;white-space:nowrap;color:#0c0810;font-size:8px;line-height:11px">Фасонка с 1 осью. (2)</div>
<div style="position:absolute;left:5px;top:319.9px;white-space:nowrap;color:#0c0810;font-size:8px;line-height:11px">Фасонка с 2 осями.</div>
<div style="position:absolute;left:5px;top:335.8px;white-space:nowrap;color:#0c0810;font-size:8px;line-height:11px">Фасонка с 2 осями. (1)</div>
</div>
<svg class="abs" style="left:0;top:0" width="1920" height="1080"><rect x="738.6" y="517" width="572" height="521.75" fill="#fff"/><path d="M739.95,517.5V1038.75M746.10,517.5V1038.75M752.25,517.5V1038.75M758.40,517.5V1038.75M764.55,517.5V1038.75M770.70,517.5V1038.75M776.85,517.5V1038.75M783.00,517.5V1038.75M789.15,517.5V1038.75M795.30,517.5V1038.75M801.45,517.5V1038.75M807.60,517.5V1038.75M813.75,517.5V1038.75M819.90,517.5V1038.75M826.05,517.5V1038.75M832.20,517.5V1038.75M838.35,517.5V1038.75M844.50,517.5V1038.75M850.65,517.5V1038.75M856.80,517.5V1038.75M862.95,517.5V1038.75M869.10,517.5V1038.75M875.25,517.5V1038.75M881.40,517.5V1038.75M887.55,517.5V1038.75M893.70,517.5V1038.75M899.85,517.5V1038.75M906.00,517.5V1038.75M912.15,517.5V1038.75M918.30,517.5V1038.75M924.45,517.5V1038.75M930.60,517.5V1038.75M936.75,517.5V1038.75M942.90,517.5V1038.75M949.05,517.5V1038.75M955.20,517.5V1038.75M961.35,517.5V1038.75M967.50,517.5V1038.75M973.65,517.5V1038.75M979.80,517.5V1038.75M985.95,517.5V1038.75M992.10,517.5V1038.75M998.25,517.5V1038.75M1004.40,517.5V1038.75M1010.55,517.5V1038.75M1016.70,517.5V1038.75M1022.85,517.5V1038.75M1029.00,517.5V1038.75M1035.15,517.5V1038.75M1041.30,517.5V1038.75M1047.45,517.5V1038.75M1053.60,517.5V1038.75M1059.75,517.5V1038.75M1065.90,517.5V1038.75M1072.05,517.5V1038.75M1078.20,517.5V1038.75M1084.35,517.5V1038.75M1090.50,517.5V1038.75M1096.65,517.5V1038.75M1102.80,517.5V1038.75M1108.95,517.5V1038.75M1115.10,517.5V1038.75M1121.25,517.5V1038.75M1127.40,517.5V1038.75M1133.55,517.5V1038.75M1139.70,517.5V1038.75M1145.85,517.5V1038.75M1152.00,517.5V1038.75M1158.15,517.5V1038.75M1164.30,517.5V1038.75M1170.45,517.5V1038.75M1176.60,517.5V1038.75M1182.75,517.5V1038.75M1188.90,517.5V1038.75M1195.05,517.5V1038.75M1201.20,517.5V1038.75M1207.35,517.5V1038.75M1213.50,517.5V1038.75M1219.65,517.5V1038.75M1225.80,517.5V1038.75M1231.95,517.5V1038.75M1238.10,517.5V1038.75M1244.25,517.5V1038.75M1250.40,517.5V1038.75M1256.55,517.5V1038.75M1262.70,517.5V1038.75M1268.85,517.5V1038.75M1275.00,517.5V1038.75M1281.15,517.5V1038.75M1287.30,517.5V1038.75M1293.45,517.5V1038.75M1299.60,517.5V1038.75M1305.75,517.5V1038.75M739.5,518.25H1310.6M739.5,524.40H1310.6M739.5,530.55H1310.6M739.5,536.70H1310.6M739.5,542.85H1310.6M739.5,549.00H1310.6M739.5,555.15H1310.6M739.5,561.30H1310.6M739.5,567.45H1310.6M739.5,573.60H1310.6M739.5,579.75H1310.6M739.5,585.90H1310.6M739.5,592.05H1310.6M739.5,598.20H1310.6M739.5,604.35H1310.6M739.5,610.50H1310.6M739.5,616.65H1310.6M739.5,622.80H1310.6M739.5,628.95H1310.6M739.5,635.10H1310.6M739.5,641.25H1310.6M739.5,647.40H1310.6M739.5,653.55H1310.6M739.5,659.70H1310.6M739.5,665.85H1310.6M739.5,672.00H1310.6M739.5,678.15H1310.6M739.5,684.30H1310.6M739.5,690.45H1310.6M739.5,696.60H1310.6M739.5,702.75H1310.6M739.5,708.90H1310.6M739.5,715.05H1310.6M739.5,721.20H1310.6M739.5,727.35H1310.6M739.5,733.50H1310.6M739.5,739.65H1310.6M739.5,745.80H1310.6M739.5,751.95H1310.6M739.5,758.10H1310.6M739.5,764.25H1310.6M739.5,770.40H1310.6M739.5,776.55H1310.6M739.5,782.70H1310.6M739.5,788.85H1310.6M739.5,795.00H1310.6M739.5,801.15H1310.6M739.5,807.30H1310.6M739.5,813.45H1310.6M739.5,819.60H1310.6M739.5,825.75H1310.6M739.5,831.90H1310.6M739.5,838.05H1310.6M739.5,844.20H1310.6M739.5,850.35H1310.6M739.5,856.50H1310.6M739.5,862.65H1310.6M739.5,868.80H1310.6M739.5,874.95H1310.6M739.5,881.10H1310.6M739.5,887.25H1310.6M739.5,893.40H1310.6M739.5,899.55H1310.6M739.5,905.70H1310.6M739.5,911.85H1310.6M739.5,918.00H1310.6M739.5,924.15H1310.6M739.5,930.30H1310.6M739.5,936.45H1310.6M739.5,942.60H1310.6M739.5,948.75H1310.6M739.5,954.90H1310.6M739.5,961.05H1310.6M739.5,967.20H1310.6M739.5,973.35H1310.6M739.5,979.50H1310.6M739.5,985.65H1310.6M739.5,991.80H1310.6M739.5,997.95H1310.6M739.5,1004.10H1310.6M739.5,1010.25H1310.6M739.5,1016.40H1310.6M739.5,1022.55H1310.6M739.5,1028.70H1310.6M739.5,1034.85H1310.6" stroke="#eeeeee" stroke-width="1" fill="none"/><line x1="739.1" y1="517" x2="739.1" y2="1038.75" stroke="#9fb0c0" stroke-width="1.2"/><line x1="1407.5" y1="517" x2="1407.5" y2="1038.75" stroke="#b2bcc6" stroke-width="1.6"/><path d="M606.08,506 H613.92 M610,502.08 V509.92" stroke="#687d8f" stroke-width="2.4640000000000004"/><rect x="627.196" y="501.296" width="6.720000000000001" height="6.720000000000001" fill="none" stroke="#687d8f" stroke-width="1.7920000000000003"/><rect x="630.108" y="504.208" width="6.720000000000001" height="6.720000000000001" fill="#fff" stroke="#687d8f" stroke-width="1.7920000000000003"/><path d="M650.88,509.92 L658.7199999999999,502.08" stroke="#687d8f" stroke-width="2.4640000000000004" stroke-linecap="round"/><path d="M672.416,502.416 L679.584,509.584 M679.584,502.416 L672.416,509.584" stroke="#687d8f" stroke-width="2.4640000000000004"/><path d="M748.1600000000001,503.76 L748.1600000000001,509.36 L753.76,509.36 Z" fill="#687d8f"/><path d="M750.4000000000001,507.12 Q754.32,501.52 757.6800000000001,508.8" fill="none" stroke="#687d8f" stroke-width="2.688"/><path d="M782.64,503.76 L782.64,509.36 L777.0400000000001,509.36 Z" fill="#a5a5a5"/><path d="M780.4,507.12 Q776.48,501.52 773.12,508.8" fill="none" stroke="#a5a5a5" stroke-width="2.688"/><line x1="793.5" y1="498.16" x2="793.5" y2="513.84" stroke="#c8d0d8" stroke-width="1"/><path d="M804.7800000000001,500.4 L811.5,509.36 M812.62,500.4 L805.9000000000001,509.36" stroke="#a5a5a5" stroke-width="1.344"/><circle cx="805.34" cy="511.04" r="1.7920000000000003" fill="none" stroke="#a5a5a5" stroke-width="1.12"/><circle cx="812.0600000000001" cy="511.04" r="1.7920000000000003" fill="none" stroke="#a5a5a5" stroke-width="1.12"/><path d="M827.3,499.84 h5.6000000000000005 l2.24,2.24 v6.720000000000001 h-7.840000000000001 Z" fill="#fff" stroke="#a5a5a5" stroke-width="1.12"/><path d="M831.78,503.76 h5.040000000000001 l2.24,2.24 v6.720000000000001 h-7.280000000000001 Z" fill="#fff" stroke="#a5a5a5" stroke-width="1.12"/><rect x="852.1999999999999" y="500.4" width="8.96" height="10.080000000000002" fill="#a5a5a5"/><path d="M856.68,504.32 h4.48 l2.8000000000000003,2.8000000000000003 v6.720000000000001 h-7.280000000000001 Z" fill="#fff" stroke="#a5a5a5" stroke-width="1.12"/><clipPath id="c2"><polygon points="869.3,671.7 985,671.7 985,690.5 1122.8,690.5 1122.8,952.8 1056.5,952.8 869.5,796"/></clipPath><g clip-path="url(#c2)"><path d="M341.7,1200L941.7,600M359.5,1200L959.5,600M377.3,1200L977.3,600M395.0,1200L995.0,600M412.8,1200L1012.8,600M430.6,1200L1030.6,600M448.4,1200L1048.4,600M466.2,1200L1066.2,600M483.9,1200L1083.9,600M501.7,1200L1101.7,600M519.5,1200L1119.5,600M537.2,1200L1137.2,600M555.0,1200L1155.0,600M572.8,1200L1172.8,600M590.6,1200L1190.6,600M608.3,1200L1208.3,600M626.1,1200L1226.1,600M643.9,1200L1243.9,600M661.7,1200L1261.7,600M679.5,1200L1279.5,600M697.2,1200L1297.2,600M715.0,1200L1315.0,600M732.8,1200L1332.8,600M750.5,1200L1350.5,600M768.3,1200L1368.3,600M786.1,1200L1386.1,600M803.9,1200L1403.9,600M821.7,1200L1421.7,600M839.4,1200L1439.4,600M857.2,1200L1457.2,600M875.0,1200L1475.0,600M892.8,1200L1492.8,600" stroke="#000" stroke-width="1.1" fill="none"/></g><polygon points="869.3,671.7 985,671.7 985,690.5 1122.8,690.5 1122.8,952.8 1056.5,952.8 869.5,796" fill="none" stroke="#000" stroke-width="1.5"/><circle cx="1098" cy="722.6" r="6" fill="#fff" stroke="#000" stroke-width="1.1"/><circle cx="1098.2" cy="785.5" r="6" fill="#fff" stroke="#000" stroke-width="1.1"/><line x1="856.3" y1="638.4" x2="1135.8" y2="638.4" stroke="#000" stroke-width="1.6"/><line x1="869.3" y1="633.7" x2="869.3" y2="659.6" stroke="#000" stroke-width="1.1"/><line x1="985" y1="633" x2="985" y2="671.7" stroke="#000" stroke-width="1.1"/><line x1="1122.7" y1="632" x2="1122.7" y2="677.8" stroke="#000" stroke-width="1.1"/><line x1="861.9" y1="645" x2="876.6999999999999" y2="631.6" stroke="#000" stroke-width="2.6" stroke-linecap="round"/><line x1="977.6" y1="645" x2="992.4" y2="631.6" stroke="#000" stroke-width="2.6" stroke-linecap="round"/><line x1="1115.3" y1="645" x2="1130.1000000000001" y2="631.6" stroke="#000" stroke-width="2.6" stroke-linecap="round"/><text x="743.2" y="603.2" font-family="Liberation Sans" font-size="22" fill="#000" text-anchor="start" style="white-space:pre">185 (D3 = 185.00)</text><line x1="742.2" y1="609.2" x2="919.7" y2="609.2" stroke="#000" stroke-width="1.4"/><line x1="919.7" y1="609.2" x2="927.6" y2="638.4" stroke="#000" stroke-width="1.1"/><text x="1083" y="611.8" font-family="Liberation Sans" font-size="22" fill="#000" text-anchor="start" style="white-space:pre">220 (D4 = 220.00)</text><line x1="1083.5" y1="618.1" x2="1260.7" y2="618.1" stroke="#000" stroke-width="1.4"/><line x1="1083.5" y1="618.1" x2="1055.4" y2="638.4" stroke="#000" stroke-width="1.1"/><circle cx="1146.5" cy="650" r="3.6" fill="none" stroke="#000" stroke-width="1.1"/><line x1="1142.54" y1="653.96" x2="1150.46" y2="646.04" stroke="#000" stroke-width="1.1"/><text x="1152.8" y="656.4" font-family="Liberation Sans" font-size="22" fill="#000" text-anchor="start" style="white-space:pre">20 (D6 = 20.00)</text><line x1="1140" y1="662.9" x2="1305" y2="662.9" stroke="#000" stroke-width="1.4"/><line x1="1140" y1="662.9" x2="1100" y2="718" stroke="#000" stroke-width="1.1"/><line x1="1075.7" y1="740" x2="1121.6" y2="703.2" stroke="#000" stroke-width="1.0"/><polygon points="1103.5,718.5 1113.6,713.5 1110.6,709.8" fill="#000"/><polygon points="1092.5,727.0 1082.4,732.0 1085.4,735.7" fill="#000"/><line x1="843" y1="659.6" x2="843" y2="808.6" stroke="#000" stroke-width="1.1"/><line x1="835" y1="671.7" x2="857.2" y2="671.7" stroke="#000" stroke-width="1.1"/><line x1="835.5" y1="796" x2="857.5" y2="796" stroke="#000" stroke-width="1.1"/><line x1="836" y1="664.3" x2="849.8" y2="679" stroke="#000" stroke-width="2.6" stroke-linecap="round"/><line x1="836.6" y1="789" x2="850.5" y2="804" stroke="#000" stroke-width="2.6" stroke-linecap="round"/><text x="836.3" y="823" font-family="Liberation Sans" font-size="21.6" fill="#000" text-anchor="start" transform="rotate(-90 836.3 823)" style="white-space:pre">200 (D2 = 200.00)</text><line x1="1173.3" y1="677.8" x2="1173.3" y2="964.9" stroke="#000" stroke-width="1.1"/><line x1="1134.8" y1="690.4" x2="1180.6" y2="690.4" stroke="#000" stroke-width="1.1"/><line x1="1135.2" y1="952.8" x2="1173.3" y2="952.8" stroke="#000" stroke-width="1.1"/><line x1="1166.4" y1="683.9" x2="1180.6" y2="697.7" stroke="#000" stroke-width="2.6" stroke-linecap="round"/><line x1="1166.5" y1="946.3" x2="1181.5" y2="961" stroke="#000" stroke-width="2.6" stroke-linecap="round"/><text x="1166.6" y="911" font-family="Liberation Sans" font-size="21.8" fill="#000" text-anchor="start" transform="rotate(-90 1166.6 911)" style="white-space:pre">420 (D1 = 420.00)</text><line x1="861.7897703308568" y1="805.1952356385829" x2="829.0212942369981" y2="844.2749871025597" stroke="#000" stroke-width="1.1"/><line x1="1048.7897703308568" y1="961.9952356385828" x2="1016.0212942369981" y2="1001.0749871025597" stroke="#000" stroke-width="1.1"/><line x1="828.6738093964668" y1="832.2384072608605" x2="1027.934123581244" y2="999.3187134863848" stroke="#000" stroke-width="1.3"/><line x1="824.8039664888554" y1="838.0785603736227" x2="844.8039664888554" y2="836.6785603736226" stroke="#000" stroke-width="2.6" stroke-linecap="round"/><line x1="1011.8039664888554" y1="994.8785603736227" x2="1031.8039664888554" y2="993.4785603736226" stroke="#000" stroke-width="2.6" stroke-linecap="round"/><text x="864.4" y="858.1" font-family="Liberation Sans" font-size="22" fill="#000" text-anchor="start" transform="rotate(39.98 864.4 858.1)" style="white-space:pre">391 (D5 = 390.51)</text><rect x="922.2" y="657.4" width="10" height="10" fill="#6d8195"/><rect x="924.7" y="661.8" width="5.0" height="1.3" fill="#e8edf0"/><rect x="980.0" y="665.7" width="10" height="11" fill="#6d8195"/><rect x="984.1" y="667.5" width="1.8" height="7.3" fill="#e8edf0"/><rect x="863.9" y="719.4" width="10" height="10" fill="#6d8195"/><rect x="868.0" y="721.1" width="1.8" height="6.7" fill="#e8edf0"/><rect x="1118.0" y="807.0" width="9" height="10" fill="#6d8195"/><rect x="1121.6" y="808.7" width="1.8" height="6.7" fill="#e8edf0"/><rect x="1085.0" y="938.6" width="10" height="10" fill="#6d8195"/><rect x="1087.5" y="943.0" width="5.0" height="1.3" fill="#e8edf0"/><rect x="1048.5" y="675.0" width="10" height="10" fill="#6d8195"/><rect x="1051.0" y="679.4" width="5.0" height="1.3" fill="#e8edf0"/><rect x="1086.0" y="706.4" width="16" height="10" fill="#6d8195"/><rect x="1088.0" y="708.4" width="12" height="6" fill="#dfe5ea"/><rect x="1088.5" y="708.9" width="6.0" height="5.0" fill="#6d8195"/><rect x="1086.0" y="769.4" width="16" height="10" fill="#6d8195"/><rect x="1088.0" y="771.4" width="12" height="6" fill="#dfe5ea"/><rect x="1088.5" y="771.9" width="6.0" height="5.0" fill="#6d8195"/><circle cx="1325.8" cy="597.5" r="5" fill="none" stroke="#687d8f" stroke-width="1.4"/><path d="M1344.5,596.5 V594.0 A3,3 0 0 1 1350.5,594.0 V596.5" fill="none" stroke="#687d8f" stroke-width="1.3"/><rect x="1343.0" y="596.5" width="9" height="6" fill="#687d8f"/><circle cx="1352.0" cy="601.5" r="1.8" fill="#d94040"/><line x1="1319.8" y1="621.3" x2="1331.8" y2="621.3" stroke="#222" stroke-width="1.5"/><path d="M1319.8,618.8 V623.8 M1331.8,618.8 V623.8" stroke="#d94040" stroke-width="1.2"/><path d="M1347.5,615.3 L1347.5,618.3 M1347.5,624.3 L1347.5,627.3" stroke="#222" stroke-width="2"/><path d="M1345.0,615.3 H1350.0 M1345.0,627.3 H1350.0" stroke="#d94040" stroke-width="1"/><line x1="1365" y1="626.3" x2="1375" y2="616.3" stroke="#222" stroke-width="1.3"/><circle cx="1365" cy="626.3" r="1" fill="#d94040"/><circle cx="1375" cy="616.3" r="1" fill="#d94040"/><path d="M1386.5,625.8 H1398.5 L1392.5,616.3 Z" fill="none" stroke="#d94040" stroke-width="1.3"/><path d="M1393.5,618.3 Q1396.5,620.3 1396.5,624.3" fill="none" stroke="#222" stroke-width="1.2"/><path d="M1320.8,640.5 A5.5,5.5 0 1 0 1328.8,637.5" fill="none" stroke="#d94040" stroke-width="1.1" stroke-dasharray="2.5,1.5"/><line x1="1322.8" y1="645.5" x2="1327.8" y2="641.5" stroke="#222" stroke-width="1.5"/><circle cx="1347.5" cy="642.5" r="5.5" fill="none" stroke="#d94040" stroke-width="1.1" stroke-dasharray="2.5,1.5"/><line x1="1343.5" y1="646.5" x2="1351.5" y2="638.5" stroke="#222" stroke-width="1.5"/></svg>
<svg class="abs" style="left:0;top:0" width="700" height="500"><circle cx="602.8" cy="484.1" r="4.6" fill="#7a8590"/><circle cx="602.8" cy="484.1" r="3" fill="#f05060"/></svg>
<div class="btn" style="left:1296px;top:1047.5px;width:53px;height:17px;line-height:15px">ОК</div>
<div class="btn" style="left:1355px;top:1047.5px;width:52px;height:17px;line-height:15px">Отмена</div>
<div class="dlg" style="left:930.8px;top:62px;width:824.2px;height:528.5px;border-left:1px solid #d0d5da"></div>
<div class="abs" style="left:930.8px;top:62px;width:824.2px;height:16px;background:#fff;border-left:1px solid #d6dadf"></div>
<div class="abs" style="left:949.5px;top:64.5px;font-size:7.5px;color:#a098a4">Профили</div>
<div class="lst" style="left:939.5px;top:98.5px;width:118.5px;height:465.1px"></div>
<div class="abs" style="left:940.5px;top:255px;width:115.5px;height:13.4px;background:#e3e7eb"></div>
<div class="abs" style="left:940.5px;top:268.4px;width:115.5px;height:1px;background:#b8c4ce"></div>
<div class="abs" style="left:940.5px;top:99.5px;width:115.5px;height:464px;overflow:hidden">
<div style="position:absolute;left:4px;top:1.8px;white-space:nowrap;color:#0c0810;font-size:7px;line-height:10px">а1. Фасонка 1.</div>
<div style="position:absolute;left:4px;top:16.0px;white-space:nowrap;color:#0c0810;font-size:7px;line-height:10px">а2. Фасонка 1.</div>
<div style="position:absolute;left:4px;top:30.2px;white-space:nowrap;color:#0c0810;font-size:7px;line-height:10px">а3. Фасонка 1.</div>
<div style="position:absolute;left:4px;top:44.4px;white-space:nowrap;color:#0c0810;font-size:7px;line-height:10px">а4. Фасонка 1.</div>
<div style="position:absolute;left:4px;top:58.6px;white-space:nowrap;color:#0c0810;font-size:7px;line-height:10px">Новый профиль</div>
<div style="position:absolute;left:4px;top:72.8px;white-space:nowrap;color:#0c0810;font-size:7px;line-height:10px">Р-7. Фасонка 1.</div>
<div style="position:absolute;left:4px;top:87.0px;white-space:nowrap;color:#0c0810;font-size:7px;line-height:10px">Р-7. Фасонка 2.</div>
<div style="position:absolute;left:4px;top:101.2px;white-space:nowrap;color:#0c0810;font-size:7px;line-height:10px">СТ-1. Фасонка 1.</div>
<div style="position:absolute;left:4px;top:115.4px;white-space:nowrap;color:#0c0810;font-size:7px;line-height:10px">Труба прямоугольная</div>
<div style="position:absolute;left:4px;top:129.6px;white-space:nowrap;color:#0c0810;font-size:7px;line-height:10px">Труба прямоугольная (1)</div>
<div style="position:absolute;left:4px;top:143.8px;white-space:nowrap;color:#0c0810;font-size:7px;line-height:10px">Ф-1. Фасонка 1.</div>
<div style="position:absolute;left:4px;top:158.0px;white-space:nowrap;color:#0c0810;font-size:7px;line-height:10px">Ф-1. Фасонка 2.</div>
<div style="position:absolute;left:4px;top:172.2px;white-space:nowrap;color:#0c0810;font-size:7px;line-height:10px">Ф-1. Фасонка 3.</div>
<div style="position:absolute;left:4px;top:186.4px;white-space:nowrap;color:#0c0810;font-size:7px;line-height:10px">Ф-1. Фасонка 4.</div>
<div style="position:absolute;left:4px;top:200.6px;white-space:nowrap;color:#0c0810;font-size:7px;line-height:10px">Ф-1. Фасонка 5.</div>
<div style="position:absolute;left:4px;top:214.8px;white-space:nowrap;color:#0c0810;font-size:7px;line-height:10px">Ф-1. Фасонка 6.</div>
<div style="position:absolute;left:4px;top:229.0px;white-space:nowrap;color:#0c0810;font-size:7px;line-height:10px">Фасонка прямоугольная с двумя отверстиями</div>
<div style="position:absolute;left:4px;top:243.2px;white-space:nowrap;color:#0c0810;font-size:7px;line-height:10px">Фасонка с 1 осью.</div>
<div style="position:absolute;left:4px;top:257.4px;white-space:nowrap;color:#0c0810;font-size:7px;line-height:10px">Фасонка с 1 осью. (1)</div>
<div style="position:absolute;left:4px;top:271.6px;white-space:nowrap;color:#0c0810;font-size:7px;line-height:10px">Фасонка с 1 осью. (2)</div>
<div style="position:absolute;left:4px;top:285.8px;white-space:nowrap;color:#0c0810;font-size:7px;line-height:10px">Фасонка с 2 осями.</div>
<div style="position:absolute;left:4px;top:300.0px;white-space:nowrap;color:#0c0810;font-size:7px;line-height:10px">Фасонка с 2 осями. (1)</div>
</div>
<svg class="abs" style="left:0;top:0" width="1920" height="1080"><rect x="1062.5" y="98.5" width="600.5" height="465.1" fill="#fff"/><path d="M1065.55,99V563.6M1076.70,99V563.6M1087.85,99V563.6M1099.00,99V563.6M1110.15,99V563.6M1121.30,99V563.6M1132.45,99V563.6M1143.60,99V563.6M1154.75,99V563.6M1165.90,99V563.6M1177.05,99V563.6M1188.20,99V563.6M1199.35,99V563.6M1210.50,99V563.6M1221.65,99V563.6M1232.80,99V563.6M1243.95,99V563.6M1255.10,99V563.6M1266.25,99V563.6M1277.40,99V563.6M1288.55,99V563.6M1299.70,99V563.6M1310.85,99V563.6M1322.00,99V563.6M1333.15,99V563.6M1344.30,99V563.6M1355.45,99V563.6M1366.60,99V563.6M1377.75,99V563.6M1388.90,99V563.6M1400.05,99V563.6M1411.20,99V563.6M1422.35,99V563.6M1433.50,99V563.6M1444.65,99V563.6M1455.80,99V563.6M1466.95,99V563.6M1478.10,99V563.6M1489.25,99V563.6M1500.40,99V563.6M1511.55,99V563.6M1522.70,99V563.6M1533.85,99V563.6M1545.00,99V563.6M1556.15,99V563.6M1567.30,99V563.6M1578.45,99V563.6M1589.60,99V563.6M1600.75,99V563.6M1611.90,99V563.6M1623.05,99V563.6M1634.20,99V563.6M1645.35,99V563.6M1656.50,99V563.6M1063.5,103.60H1663M1063.5,114.75H1663M1063.5,125.90H1663M1063.5,137.05H1663M1063.5,148.20H1663M1063.5,159.35H1663M1063.5,170.50H1663M1063.5,181.65H1663M1063.5,192.80H1663M1063.5,203.95H1663M1063.5,215.10H1663M1063.5,226.25H1663M1063.5,237.40H1663M1063.5,248.55H1663M1063.5,259.70H1663M1063.5,270.85H1663M1063.5,282.00H1663M1063.5,293.15H1663M1063.5,304.30H1663M1063.5,315.45H1663M1063.5,326.60H1663M1063.5,337.75H1663M1063.5,348.90H1663M1063.5,360.05H1663M1063.5,371.20H1663M1063.5,382.35H1663M1063.5,393.50H1663M1063.5,404.65H1663M1063.5,415.80H1663M1063.5,426.95H1663M1063.5,438.10H1663M1063.5,449.25H1663M1063.5,460.40H1663M1063.5,471.55H1663M1063.5,482.70H1663M1063.5,493.85H1663M1063.5,505.00H1663M1063.5,516.15H1663M1063.5,527.30H1663M1063.5,538.45H1663M1063.5,549.60H1663M1063.5,560.75H1663" stroke="#ebebeb" stroke-width="1" fill="none"/><line x1="1062.8" y1="98.5" x2="1062.8" y2="563.6" stroke="#9fb0c0" stroke-width="1.2"/><line x1="939.5" y1="99" x2="1749.5" y2="99" stroke="#a8b6c2" stroke-width="1"/><line x1="1749.2" y1="98.5" x2="1749.2" y2="563.6" stroke="#b2bcc6" stroke-width="1.6"/><path d="M944.8,88.2 H951.8 M948.3,84.7 V91.7" stroke="#687d8f" stroke-width="2.2"/><rect x="963.0999999999999" y="84.0" width="6.0" height="6.0" fill="none" stroke="#687d8f" stroke-width="1.6"/><rect x="965.6999999999999" y="86.60000000000001" width="6.0" height="6.0" fill="#fff" stroke="#687d8f" stroke-width="1.6"/><path d="M984.9,91.7 L991.9,84.7" stroke="#687d8f" stroke-width="2.2" stroke-linecap="round"/><path d="M1003.8,85.0 L1010.2,91.4 M1010.2,85.0 L1003.8,91.4" stroke="#687d8f" stroke-width="2.2"/><path d="M1071.5,86.2 L1071.5,91.2 L1076.5,91.2 Z" fill="#687d8f"/><path d="M1073.5,89.2 Q1077.0,84.2 1080.0,90.7" fill="none" stroke="#687d8f" stroke-width="2.4"/><path d="M1102.3,86.2 L1102.3,91.2 L1097.3,91.2 Z" fill="#a5a5a5"/><path d="M1100.3,89.2 Q1096.8,84.2 1093.8,90.7" fill="none" stroke="#a5a5a5" stroke-width="2.4"/><line x1="1111.7" y1="81.2" x2="1111.7" y2="95.2" stroke="#c8d0d8" stroke-width="1"/><path d="M1122.0,83.2 L1128.0,91.2 M1129.0,83.2 L1123.0,91.2" stroke="#a5a5a5" stroke-width="1.2"/><circle cx="1122.5" cy="92.7" r="1.6" fill="none" stroke="#a5a5a5" stroke-width="1.0"/><circle cx="1128.5" cy="92.7" r="1.6" fill="none" stroke="#a5a5a5" stroke-width="1.0"/><path d="M1142.4,82.7 h5.0 l2.0,2.0 v6.0 h-7.0 Z" fill="#fff" stroke="#a5a5a5" stroke-width="1.0"/><path d="M1146.4,86.2 h4.5 l2.0,2.0 v6.0 h-6.5 Z" fill="#fff" stroke="#a5a5a5" stroke-width="1.0"/><rect x="1164.3" y="83.2" width="8.0" height="9.0" fill="#a5a5a5"/><path d="M1168.3,86.7 h4.0 l2.5,2.5 v6.0 h-6.5 Z" fill="#fff" stroke="#a5a5a5" stroke-width="1.0"/><circle cx="941.9" cy="68.9" r="4.2" fill="#7a8590"/><circle cx="941.9" cy="68.9" r="2.7" fill="#f05060"/><path d="M1738.5,65.8 L1744.8,72.1 M1744.8,65.8 L1738.5,72.1" stroke="#9aa0a6" stroke-width="0.9"/><line x1="1685" y1="68.8" x2="1691" y2="68.8" stroke="#c8ccd0" stroke-width="0.9"/><clipPath id="c1"><rect x="1211" y="237.3" width="178.4000000000001" height="222.7"/></clipPath><g clip-path="url(#c1)"><path d="M758.0,700L1358.0,100M789.7,700L1389.7,100M821.4,700L1421.4,100M853.1,700L1453.1,100M884.7,700L1484.7,100M916.4,700L1516.4,100M948.1,700L1548.1,100M979.8,700L1579.8,100M1011.5,700L1611.5,100M1043.1,700L1643.1,100M1074.8,700L1674.8,100M1106.5,700L1706.5,100M1138.2,700L1738.2,100M1169.9,700L1769.9,100" stroke="#000" stroke-width="1.9" fill="none"/></g><rect x="1211" y="237.3" width="178.4000000000001" height="222.7" fill="none" stroke="#000" stroke-width="2.1"/><circle cx="1250" cy="292.7" r="10.7" fill="#fff" stroke="#000" stroke-width="1.9"/><circle cx="1351" cy="292.7" r="10.7" fill="#fff" stroke="#000" stroke-width="1.9"/><circle cx="1250" cy="404" r="10.7" fill="#fff" stroke="#000" stroke-width="1.9"/><circle cx="1351" cy="404.3" r="10.7" fill="#fff" stroke="#000" stroke-width="1.9"/><circle cx="1211.5" cy="237.5" r="4.3" fill="#000"/><circle cx="1211.5" cy="460" r="4.3" fill="#000"/><line x1="1188" y1="187.8" x2="1412.7" y2="187.8" stroke="#000" stroke-width="2.1"/><line x1="1211" y1="176.5" x2="1211" y2="215" stroke="#000" stroke-width="1.7"/><line x1="1389.4" y1="176.5" x2="1389.4" y2="215" stroke="#000" stroke-width="1.7"/><line x1="1198" y1="200.3" x2="1223.7" y2="175.5" stroke="#000" stroke-width="4.2" stroke-linecap="round"/><line x1="1377" y1="200" x2="1402.8" y2="175" stroke="#000" stroke-width="4.2" stroke-linecap="round"/><text x="1145" y="177.2" font-family="Liberation Sans" font-size="38.6" fill="#000" text-anchor="start" style="white-space:pre">160 (D1 = 160.00)</text><line x1="1159" y1="214" x2="1159" y2="483" stroke="#000" stroke-width="2.1"/><line x1="1148.5" y1="237.3" x2="1189" y2="237.3" stroke="#000" stroke-width="1.7"/><line x1="1147" y1="460" x2="1189.3" y2="460" stroke="#000" stroke-width="1.7"/><line x1="1145.5" y1="224" x2="1171.3" y2="250.7" stroke="#000" stroke-width="4.2" stroke-linecap="round"/><line x1="1147" y1="447.7" x2="1171.7" y2="473.2" stroke="#000" stroke-width="4.2" stroke-linecap="round"/><text x="1147.3" y="507" font-family="Liberation Sans" font-size="39.2" fill="#000" text-anchor="start" transform="rotate(-90 1147.3 507)" style="white-space:pre">200 (D2 = 200.00)</text><line x1="1350.4" y1="292.4" x2="1367.6" y2="350.8" stroke="#000" stroke-width="1.7"/><line x1="1367.6" y1="350.8" x2="1662" y2="350.8" stroke="#000" stroke-width="2.1"/><circle cx="1379" cy="330.5" r="6.8" fill="none" stroke="#000" stroke-width="1.8"/><line x1="1371.52" y1="337.98" x2="1386.48" y2="323.02" stroke="#000" stroke-width="1.8"/><text x="1388.5" y="340.2" font-family="Liberation Sans" font-size="39" fill="#000" text-anchor="start" style="white-space:pre">20 (D3 = 20.00)</text><line x1="1314.7" y1="329" x2="1387" y2="256.8" stroke="#000" stroke-width="1.4"/><polygon points="1358.6,285.1 1376.7,273.5 1370.2,267.0" fill="#000"/><polygon points="1343.4,300.3 1325.3,311.9 1331.8,318.4" fill="#000"/><rect x="1207.3" y="223.5" width="9" height="9" fill="#6d8195"/><rect x="1209.3" y="225.5" width="5" height="5" fill="#dfe5ea"/><rect x="1209.8" y="226.0" width="2.5" height="4.0" fill="#6d8195"/><rect x="1385.4" y="223.5" width="9" height="9" fill="#6d8195"/><rect x="1387.4" y="225.5" width="5" height="5" fill="#dfe5ea"/><rect x="1387.9" y="226.0" width="2.5" height="4.0" fill="#6d8195"/><rect x="1206.8" y="446.5" width="9" height="9" fill="#6d8195"/><rect x="1208.8" y="448.5" width="5" height="5" fill="#dfe5ea"/><rect x="1209.3" y="449.0" width="2.5" height="4.0" fill="#6d8195"/><rect x="1234.0" y="278.9" width="9" height="9" fill="#6d8195"/><circle cx="1238.5" cy="283.4" r="3.0" fill="none" stroke="#e0e6ea" stroke-width="1"/><rect x="1334.5" y="278.9" width="9" height="9" fill="#6d8195"/><circle cx="1339" cy="283.4" r="3.0" fill="none" stroke="#e0e6ea" stroke-width="1"/><rect x="1234.1" y="391.0" width="9" height="9" fill="#6d8195"/><circle cx="1238.6" cy="395.5" r="3.0" fill="none" stroke="#e0e6ea" stroke-width="1"/><rect x="1334.5" y="391.0" width="9" height="9" fill="#6d8195"/><circle cx="1339" cy="395.5" r="3.0" fill="none" stroke="#e0e6ea" stroke-width="1"/><rect x="1666.5" y="102.3" width="18" height="17" rx="1.5" fill="#cdd3da"/><path d="M1673.0,105.8 L1673.0,114.3 L1675.0,112.8 L1676.5,115.8 L1677.7,115.2 L1676.3,112.3 L1679.0,112.3 Z" fill="none" stroke="#687d8f" stroke-width="1"/><path d="M1688.7,115.8 L1702.7,105.8 M1688.7,105.8 L1696.7,111.8 M1692.7,115.8 L1702.7,115.8" stroke="#9aa6b2" stroke-width="1" stroke-dasharray="2,1"/><rect x="1708.8" y="104.8" width="13" height="12" fill="none" stroke="#9aa6b2" stroke-width="1" stroke-dasharray="2,1.2"/><line x1="1670" y1="133" x2="1682" y2="133" stroke="#687d8f" stroke-width="2"/><line x1="1696" y1="127" x2="1696" y2="139" stroke="#687d8f" stroke-width="1.3"/><path d="M1711.0,136.5 L1718.5,129 M1712.5,138 L1720.0,130.5" stroke="#d94040" stroke-width="1.3"/><path d="M1730.8,127 V138 H1741.8" fill="none" stroke="#687d8f" stroke-width="1.3"/><rect x="1731.8" y="133" width="4" height="4" fill="none" stroke="#d94040" stroke-width="1.2"/><line x1="1676" y1="146.7" x2="1676" y2="156.7" stroke="#687d8f" stroke-width="1.3"/><circle cx="1676" cy="146.7" r="1.2" fill="#d94040"/><line x1="1690" y1="151.7" x2="1700" y2="151.7" stroke="#687d8f" stroke-width="1.3"/><circle cx="1691" cy="151.7" r="1.2" fill="#d94040"/><circle cx="1701.5" cy="151.7" r="1" fill="#687d8f"/><circle cx="1715.5" cy="152.7" r="5" fill="none" stroke="#687d8f" stroke-width="1.3"/><line x1="1709.5" y1="147.2" x2="1721.5" y2="147.2" stroke="#d94040" stroke-width="1.3"/><path d="M1732.8,150.39999999999998 H1738.8 M1732.8,153.0 H1738.8" stroke="#687d8f" stroke-width="1"/><circle cx="1676" cy="169" r="5" fill="none" stroke="#687d8f" stroke-width="1.4"/><path d="M1693,168 V165.5 A3,3 0 0 1 1699,165.5 V168" fill="none" stroke="#687d8f" stroke-width="1.3"/><rect x="1691.5" y="168" width="9" height="6" fill="#687d8f"/><circle cx="1700.5" cy="173" r="1.8" fill="#d94040"/><line x1="1666" y1="180.3" x2="1745" y2="180.3" stroke="#c5ccd3" stroke-width="1"/><circle cx="1673" cy="192" r="1" fill="#222"/><circle cx="1679" cy="192" r="1" fill="#222"/><line x1="1696" y1="187" x2="1696" y2="197" stroke="#222" stroke-width="1.3"/><rect x="1694" y="196" width="4" height="1.5" fill="#d94040"/><line x1="1710.5" y1="197" x2="1720.5" y2="187" stroke="#222" stroke-width="1.3"/><circle cx="1710.5" cy="197" r="1" fill="#d94040"/><circle cx="1720.5" cy="187" r="1" fill="#d94040"/><path d="M1729.8,196.5 H1741.8 L1735.8,187 Z" fill="none" stroke="#d94040" stroke-width="1.3"/><path d="M1736.8,189 Q1739.8,191 1739.8,195" fill="none" stroke="#222" stroke-width="1.2"/><path d="M1671,208 A5.5,5.5 0 1 0 1679,205" fill="none" stroke="#d94040" stroke-width="1.1" stroke-dasharray="2.5,1.5"/><line x1="1673" y1="213" x2="1678" y2="209" stroke="#222" stroke-width="1.5"/><circle cx="1696" cy="210" r="5.5" fill="none" stroke="#d94040" stroke-width="1.1" stroke-dasharray="2.5,1.5"/><line x1="1692" y1="214" x2="1700" y2="206" stroke="#222" stroke-width="1.5"/></svg>
<div class="btn" style="left:1649px;top:570px;width:48px;height:16px;line-height:14px;font-size:7.5px">ОК</div>
<div class="btn" style="left:1702px;top:570px;width:48px;height:16px;line-height:14px;font-size:7.5px">Отмена</div>
<div class="abs" style="left:930.9px;top:191px;width:1.6px;height:34px;background:#f0a400"></div>
<div class="abs" style="left:1919px;top:0;width:1px;height:1080px;background:#fff"></div>
</body></html>
